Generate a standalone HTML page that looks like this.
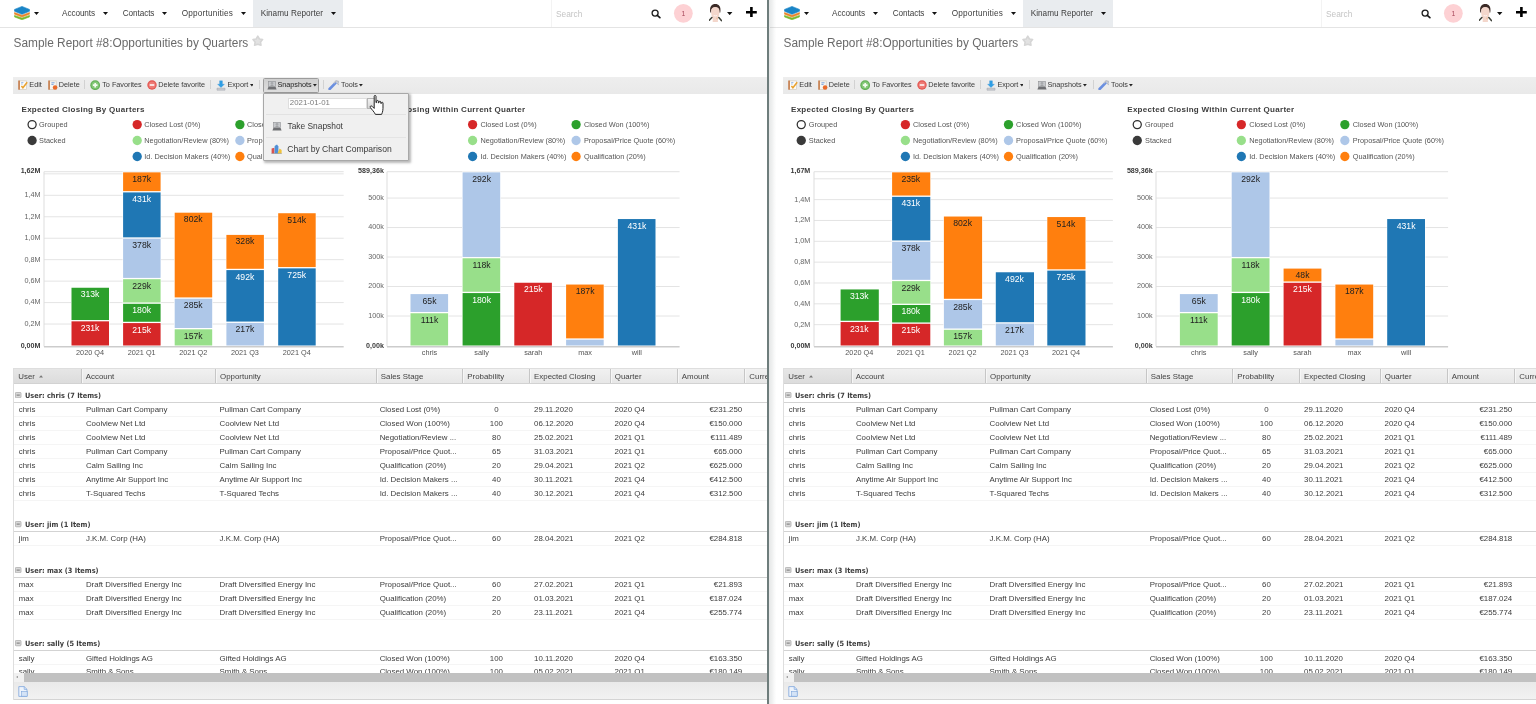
<!DOCTYPE html><html lang="en"><head><meta charset="utf-8"><title>Sample Report #8: Opportunities by Quarters</title><style>

html,body{margin:0;padding:0;background:#fff;}
body{width:1536px;height:704px;overflow:hidden;position:relative;font-family:"Liberation Sans",sans-serif;}
.pane{position:absolute;top:0;height:704px;overflow:hidden;will-change:transform;}
.t{position:absolute;white-space:nowrap;line-height:12px;height:12px;}
.b{position:absolute;display:block;}

</style></head><body>
<div class="pane" style="left:0px;width:767.2px"><div class="b" style="left:0.00px;top:27.30px;width:768.00px;height:1.20px;background:#e4e4e4;"></div>
<svg class="b" style="left:13.90px;top:5.70px" width="16" height="14.2" viewBox="0 0 16 14.2"><path d="M0.5 9.4 L8 12.0 L15.5 9.4 L15.5 10.9 L8 13.8 L0.5 10.9 Z" fill="#7ab82d" stroke="#7ab82d" stroke-width="0.6" stroke-linejoin="round"/><path d="M0.5 6.6 L8 9.2 L15.5 6.6 L15.5 8.2 L8 11.1 L0.5 8.2 Z" fill="#e9842a" stroke="#e9842a" stroke-width="0.6" stroke-linejoin="round"/><path d="M0.5 3.4 L8 0.4 L15.5 3.4 L15.5 5.3 L8 8.3 L0.5 5.3 Z" fill="#1a85c7" stroke="#1a85c7" stroke-width="0.6" stroke-linejoin="round"/></svg><svg class="b" style="left:34.30px;top:12.10px" width="5.0" height="3.0" viewBox="0 0 5.0 3.0"><path d="M0 0 H5.0 L2.5 3.0 Z" fill="#111"/></svg><div class="t" style="top:8px;font-size:8.2px;color:#3d3d3d;letter-spacing:-0.08px;left:62.00px;">Accounts</div>
<svg class="b" style="left:102.70px;top:12.10px" width="5.0" height="3.0" viewBox="0 0 5.0 3.0"><path d="M0 0 H5.0 L2.5 3.0 Z" fill="#111"/></svg><div class="t" style="top:8px;font-size:8.2px;color:#3d3d3d;letter-spacing:-0.08px;left:122.70px;">Contacts</div>
<svg class="b" style="left:162.00px;top:12.10px" width="5.0" height="3.0" viewBox="0 0 5.0 3.0"><path d="M0 0 H5.0 L2.5 3.0 Z" fill="#111"/></svg><div class="t" style="top:8px;font-size:8.2px;color:#3d3d3d;letter-spacing:0.2px;left:181.70px;">Opportunities</div>
<svg class="b" style="left:241.00px;top:12.10px" width="5.0" height="3.0" viewBox="0 0 5.0 3.0"><path d="M0 0 H5.0 L2.5 3.0 Z" fill="#111"/></svg><div class="b" style="left:253.20px;top:0.00px;width:89.80px;height:27.30px;background:#e9ecef;"></div>
<div class="t" style="top:8px;font-size:8.2px;color:#3d3d3d;letter-spacing:0.03px;left:260.70px;">Kinamu Reporter</div>
<svg class="b" style="left:331.20px;top:12.10px" width="5.0" height="3.0" viewBox="0 0 5.0 3.0"><path d="M0 0 H5.0 L2.5 3.0 Z" fill="#111"/></svg><div class="b" style="left:551.00px;top:0.00px;width:1.00px;height:27.30px;background:#f3f3f3;"></div>
<div class="t" style="top:8px;font-size:8.3px;color:#c4c4c4;left:556.00px;">Search</div>
<svg class="b" style="left:650.80px;top:8.60px" width="10" height="10" viewBox="0 0 10 10"><circle cx="4.1" cy="4.1" r="3.0" fill="none" stroke="#1a1a1a" stroke-width="1.3"/><path d="M6.3 6.3 L8.9 8.7" stroke="#1a1a1a" stroke-width="1.6" stroke-linecap="round"/></svg><svg class="b" style="left:673.00px;top:3.00px" width="21" height="21" viewBox="0 0 21 21"><circle cx="10.35" cy="10.3" r="9.4" fill="#fdd1d4"/></svg><div class="t" style="top:8px;font-size:6.9px;color:#a8485c;left:533.40px;width:300px;text-align:center;">1</div>
<svg class="b" style="left:708.80px;top:4.40px" width="12.8" height="18" viewBox="0 0 12.8 18"><path d="M1.3 8.4 C0.2 2.6 3 0.1 6.3 0.1 C9.6 0.1 12.3 2.6 11.3 8.4 L10.2 8.4 C10.6 5 9 3.5 6.3 3.5 C3.6 3.5 2 5 2.4 8.4 Z" fill="#3b2a26"/><path d="M2.1 7.2 C2.1 4.5 3.8 3.1 6.3 3.1 C8.8 3.1 10.5 4.5 10.5 7.2 C10.5 10.8 9.5 13 8.9 14.6 L8.9 18 L3.7 18 L3.7 14.6 C3.1 13 2.1 10.8 2.1 7.2 Z" fill="#f3d6cb"/><path d="M0.3 16.2 L2.9 13.5 M9.8 13.5 L12.4 16.6" stroke="#3f4139" stroke-width="1.5" stroke-linecap="round"/><path d="M7.2 14 L8.6 13.2 L8.4 16 Z" fill="#e9b48c"/><path d="M4.6 11.4 Q6.3 12.6 8 11.4" stroke="#fff" stroke-width="0.7" fill="none"/></svg><svg class="b" style="left:727.20px;top:12.20px" width="5.4" height="3.2" viewBox="0 0 5.4 3.2"><path d="M0 0 H5.4 L2.7 3.2 Z" fill="#111"/></svg><svg class="b" style="left:746.20px;top:7.30px" width="10.8" height="10.2" viewBox="0 0 10.8 10.2"><path d="M0 3.9 H4.1 V0 H6.7 V3.9 H10.8 V6.4 H6.7 V10.2 H4.1 V6.4 H0 Z" fill="#000"/></svg><div class="t" style="top:37px;font-size:11.86px;color:#6a6a6a;left:13.60px;">Sample Report #8:Opportunities by Quarters</div>
<svg class="b" style="left:252.20px;top:35.40px" width="11.6" height="11.6" viewBox="0 0 11.6 11.6"><path d="M5.8 1.2 L7.4 4.0 L10.6 4.6 L8.5 7.0 L9.0 10.3 L5.8 9.2 L2.6 10.3 L3.1 7.0 L1.0 4.6 L4.2 4.0 Z" fill="#e2e2e2" stroke="#d6d6d6" stroke-width="1.6" stroke-linejoin="round"/></svg><div class="b" style="left:13.30px;top:77.00px;width:760.00px;height:17.00px;background:linear-gradient(#eeeeee,#e9e9e9);"></div>
<svg class="b" style="left:18.20px;top:80.00px" width="10" height="10" viewBox="0 0 10 10"><rect x="1.2" y="0.9" width="7.4" height="8.5" fill="#fcfbf8" stroke="#d3ccc0" stroke-width="0.7"/><rect x="0.3" y="0.5" width="1.5" height="9.2" fill="#c4733c"/><path d="M3.2 2.6 H5.4 M3.2 4 H4.6" stroke="#8db3e6" stroke-width="0.9"/><path d="M3.4 5.9 L4.9 7.7 L9.2 2.2" stroke="#e9a22e" stroke-width="1.5" fill="none"/></svg><div class="t" style="top:79px;font-size:7.28px;color:#3a3a3a;left:29.30px;">Edit</div>
<svg class="b" style="left:47.80px;top:80.00px" width="10" height="10" viewBox="0 0 10 10"><rect x="1.2" y="0.9" width="7" height="8.5" fill="#f7f5f1" stroke="#d3ccc0" stroke-width="0.7"/><rect x="0.3" y="0.5" width="1.5" height="9.2" fill="#c4733c"/><path d="M3.4 2.8 H6.6 M3.4 4.4 H5.6" stroke="#7ea6de" stroke-width="1"/><circle cx="7.1" cy="7.5" r="2.3" fill="#e96b2b"/></svg><div class="t" style="top:79px;font-size:7.28px;color:#3a3a3a;left:58.70px;">Delete</div>
<div class="b" style="left:84.20px;top:80.20px;width:0.90px;height:9.00px;background:#d2d2d2;"></div>
<svg class="b" style="left:89.80px;top:80.00px" width="10.4" height="10.4" viewBox="0 0 10.4 10.4"><circle cx="5.2" cy="5.2" r="4.9" fill="#63b057"/><circle cx="5.2" cy="5.2" r="3.6" fill="#86c97a"/><path d="M5.2 2.9 V7.5 M2.9 5.2 H7.5" stroke="#f4fbf2" stroke-width="1.7"/></svg><div class="t" style="top:79px;font-size:7.28px;color:#3a3a3a;left:102.20px;">To Favorites</div>
<svg class="b" style="left:146.60px;top:80.20px" width="10" height="10" viewBox="0 0 10 10"><circle cx="5" cy="5" r="4.7" fill="#e2544f"/><circle cx="5" cy="5" r="3.5" fill="#ee7a74"/><path d="M2.7 5 H7.3" stroke="#fdf0ef" stroke-width="1.7"/></svg><div class="t" style="top:79px;font-size:7.28px;color:#3a3a3a;left:158.20px;">Delete favorite</div>
<div class="b" style="left:210.40px;top:80.20px;width:0.90px;height:9.00px;background:#d2d2d2;"></div>
<svg class="b" style="left:215.60px;top:79.80px" width="10" height="11" viewBox="0 0 10 11"><path d="M1 8.2 H9 V10.2 H1 Z" fill="#c9ccd2" stroke="#9aa0aa" stroke-width="0.5"/><path d="M5 7.6 L1.6 4.2 H3.6 V0.8 H6.4 V4.2 H8.4 Z" fill="#2f9fe6" stroke="#2b8ad0" stroke-width="0.3"/></svg><div class="t" style="top:79px;font-size:7.28px;color:#3a3a3a;left:227.40px;">Export</div>
<svg class="b" style="left:249.60px;top:84.30px" width="3.8" height="2.4" viewBox="0 0 3.8 2.4"><path d="M0 0 H3.8 L1.9 2.4 Z" fill="#222"/></svg><div class="b" style="left:258.90px;top:80.20px;width:0.90px;height:9.00px;background:#d2d2d2;"></div>
<div class="b" style="left:263.30px;top:78.20px;width:56.20px;height:14.40px;background:linear-gradient(#cfcfcf,#dedede);border:0.9px solid #9c9c9c;border-radius:1.5px;box-sizing:border-box;"></div>
<svg class="b" style="left:266.60px;top:80.00px" width="10" height="10" viewBox="0 0 10 10"><path d="M0.4 9.4 L1.6 6.4 H8.4 L9.6 9.4 Z" fill="#6f7073"/><rect x="1.6" y="1.4" width="6.8" height="5.2" fill="#c7c9cc" stroke="#8f9194" stroke-width="0.6"/><circle cx="5" cy="3.4" r="1.4" fill="#a7a9ac"/><path d="M2.6 6.4 Q5 3.8 7.4 6.4 Z" fill="#9d9fa2"/></svg><div class="t" style="top:79px;font-size:7.28px;color:#222;left:277.40px;">Snapshots</div>
<svg class="b" style="left:312.90px;top:84.30px" width="3.8" height="2.4" viewBox="0 0 3.8 2.4"><path d="M0 0 H3.8 L1.9 2.4 Z" fill="#222"/></svg><div class="b" style="left:323.30px;top:80.20px;width:0.90px;height:9.00px;background:#d2d2d2;"></div>
<svg class="b" style="left:328.00px;top:79.80px" width="11.4" height="10" viewBox="0 0 11.4 10"><path d="M1.6 9 L7.4 3.2" stroke="#6a8fe0" stroke-width="2.6" stroke-linecap="round"/><path d="M6.4 2.8 L8.2 0.8 L10.8 1.6 L9.6 3.4 L10.4 4.4" stroke="#b9bdc6" stroke-width="1.4" fill="none" stroke-linecap="round"/></svg><div class="t" style="top:79px;font-size:7.28px;color:#3a3a3a;left:341.00px;">Tools</div>
<svg class="b" style="left:359.00px;top:84.30px" width="3.8" height="2.4" viewBox="0 0 3.8 2.4"><path d="M0 0 H3.8 L1.9 2.4 Z" fill="#222"/></svg><svg class="b" style="left:41.80px;top:165.00px" width="303.70" height="186" viewBox="0 0 303.70 186"><rect x="2.00" y="6.20" width="299.70" height="1.00" fill="#e2e2e2"/><rect x="2.00" y="158.54" width="299.70" height="1.00" fill="#e4e4e4"/><rect x="2.00" y="137.09" width="299.70" height="1.00" fill="#e4e4e4"/><rect x="2.00" y="115.63" width="299.70" height="1.00" fill="#e4e4e4"/><rect x="2.00" y="94.17" width="299.70" height="1.00" fill="#e4e4e4"/><rect x="2.00" y="72.72" width="299.70" height="1.00" fill="#e4e4e4"/><rect x="2.00" y="51.26" width="299.70" height="1.00" fill="#e4e4e4"/><rect x="2.00" y="29.80" width="299.70" height="1.00" fill="#e4e4e4"/><rect x="2.00" y="8.35" width="299.70" height="1.00" fill="#e4e4e4"/><rect x="1.50" y="6.70" width="1.00" height="174.80" fill="#dedede"/><rect x="2.00" y="181.00" width="299.70" height="1.50" fill="#cccccc"/><rect x="29.00" y="155.49" width="38.50" height="25.01" fill="#fff"/><rect x="29.50" y="156.34" width="37.50" height="24.16" fill="#d62728"/><rect x="29.00" y="121.91" width="38.50" height="33.78" fill="#fff"/><rect x="29.50" y="122.76" width="37.50" height="32.28" fill="#2ca02c"/><rect x="80.60" y="157.23" width="38.50" height="23.27" fill="#fff"/><rect x="81.10" y="158.08" width="37.50" height="22.42" fill="#d62728"/><rect x="80.60" y="137.92" width="38.50" height="19.51" fill="#fff"/><rect x="81.10" y="138.77" width="37.50" height="18.01" fill="#2ca02c"/><rect x="80.60" y="113.35" width="38.50" height="24.77" fill="#fff"/><rect x="81.10" y="114.20" width="37.50" height="23.27" fill="#98df8a"/><rect x="80.60" y="72.80" width="38.50" height="40.75" fill="#fff"/><rect x="81.10" y="73.65" width="37.50" height="39.25" fill="#aec7e8"/><rect x="80.60" y="26.56" width="38.50" height="46.44" fill="#fff"/><rect x="81.10" y="27.41" width="37.50" height="44.94" fill="#1f77b4"/><rect x="80.60" y="6.50" width="38.50" height="20.26" fill="#fff"/><rect x="81.10" y="7.35" width="37.50" height="18.76" fill="#ff7f0e"/><rect x="132.20" y="163.46" width="38.50" height="17.04" fill="#fff"/><rect x="132.70" y="164.31" width="37.50" height="16.19" fill="#98df8a"/><rect x="132.20" y="132.88" width="38.50" height="30.78" fill="#fff"/><rect x="132.70" y="133.73" width="37.50" height="29.28" fill="#aec7e8"/><rect x="132.20" y="46.84" width="38.50" height="86.24" fill="#fff"/><rect x="132.70" y="47.69" width="37.50" height="84.74" fill="#ff7f0e"/><rect x="183.90" y="157.02" width="38.50" height="23.48" fill="#fff"/><rect x="184.40" y="157.87" width="37.50" height="22.63" fill="#aec7e8"/><rect x="183.90" y="104.24" width="38.50" height="52.98" fill="#fff"/><rect x="184.40" y="105.09" width="37.50" height="51.48" fill="#1f77b4"/><rect x="183.90" y="69.05" width="38.50" height="35.39" fill="#fff"/><rect x="184.40" y="69.90" width="37.50" height="33.89" fill="#ff7f0e"/><rect x="235.70" y="102.52" width="38.50" height="77.98" fill="#fff"/><rect x="236.20" y="103.37" width="37.50" height="77.13" fill="#1f77b4"/><rect x="235.70" y="47.38" width="38.50" height="55.34" fill="#fff"/><rect x="236.20" y="48.23" width="37.50" height="53.84" fill="#ff7f0e"/></svg><div class="t" style="top:104px;font-size:8.0px;color:#3c3c3c;font-weight:bold;letter-spacing:0.29px;left:21.50px;">Expected Closing By Quarters</div>
<svg class="b" style="left:11.50px;top:115px" width="260" height="50" viewBox="0 0 260 50"><circle cx="20.10" cy="9.60" r="4.05" fill="#fff" stroke="#2f2f2f" stroke-width="1.25"/><circle cx="20.10" cy="25.50" r="4.65" fill="#3a3a3a"/><circle cx="125.20" cy="9.60" r="4.65" fill="#d62728"/><circle cx="227.90" cy="9.60" r="4.65" fill="#2ca02c"/><circle cx="125.20" cy="25.50" r="4.65" fill="#98df8a"/><circle cx="227.90" cy="25.50" r="4.65" fill="#aec7e8"/><circle cx="125.20" cy="41.50" r="4.65" fill="#1f77b4"/><circle cx="227.90" cy="41.50" r="4.65" fill="#ff7f0e"/></svg><div class="t" style="top:119px;font-size:7.34px;color:#555;left:39.10px;">Grouped</div>
<div class="t" style="top:135px;font-size:7.34px;color:#555;left:39.10px;">Stacked</div>
<div class="t" style="top:119px;font-size:7.34px;color:#555;left:144.30px;">Closed Lost (0%)</div>
<div class="t" style="top:119px;font-size:7.34px;color:#555;left:247.00px;">Closed Won (100%)</div>
<div class="t" style="top:135px;font-size:7.34px;color:#555;left:144.30px;">Negotiation/Review (80%)</div>
<div class="t" style="top:135px;font-size:7.34px;color:#555;left:247.00px;">Proposal/Price Quote (60%)</div>
<div class="t" style="top:151px;font-size:7.34px;color:#555;left:144.30px;">Id. Decision Makers (40%)</div>
<div class="t" style="top:151px;font-size:7.34px;color:#555;left:247.00px;">Qualification (20%)</div>
<div class="t" style="top:318px;font-size:7.25px;color:#666;left:-259.50px;width:300px;text-align:right;">0,2M</div>
<div class="t" style="top:296px;font-size:7.25px;color:#666;left:-259.50px;width:300px;text-align:right;">0,4M</div>
<div class="t" style="top:275px;font-size:7.25px;color:#666;left:-259.50px;width:300px;text-align:right;">0,6M</div>
<div class="t" style="top:254px;font-size:7.25px;color:#666;left:-259.50px;width:300px;text-align:right;">0,8M</div>
<div class="t" style="top:232px;font-size:7.25px;color:#666;left:-259.50px;width:300px;text-align:right;">1,0M</div>
<div class="t" style="top:211px;font-size:7.25px;color:#666;left:-259.50px;width:300px;text-align:right;">1,2M</div>
<div class="t" style="top:189px;font-size:7.25px;color:#666;left:-259.50px;width:300px;text-align:right;">1,4M</div>
<div class="t" style="top:165px;font-size:7.15px;color:#3a3a3a;font-weight:bold;left:-259.50px;width:300px;text-align:right;">1,62M</div>
<div class="t" style="top:340px;font-size:7.15px;color:#3a3a3a;font-weight:bold;left:-259.50px;width:300px;text-align:right;">0,00M</div>
<div class="t" style="top:322px;font-size:8.66px;color:#fff;left:-59.95px;width:300px;text-align:center;">231k</div>
<div class="t" style="top:288px;font-size:8.66px;color:#fff;left:-59.95px;width:300px;text-align:center;">313k</div>
<div class="t" style="top:347px;font-size:7.3px;color:#555;left:-59.95px;width:300px;text-align:center;">2020 Q4</div>
<div class="t" style="top:324px;font-size:8.66px;color:#fff;left:-8.35px;width:300px;text-align:center;">215k</div>
<div class="t" style="top:304px;font-size:8.66px;color:#fff;left:-8.35px;width:300px;text-align:center;">180k</div>
<div class="t" style="top:280px;font-size:8.66px;color:#222;left:-8.35px;width:300px;text-align:center;">229k</div>
<div class="t" style="top:239px;font-size:8.66px;color:#222;left:-8.35px;width:300px;text-align:center;">378k</div>
<div class="t" style="top:193px;font-size:8.66px;color:#fff;left:-8.35px;width:300px;text-align:center;">431k</div>
<div class="t" style="top:173px;font-size:8.66px;color:#222;left:-8.35px;width:300px;text-align:center;">187k</div>
<div class="t" style="top:347px;font-size:7.3px;color:#555;left:-8.35px;width:300px;text-align:center;">2021 Q1</div>
<div class="t" style="top:330px;font-size:8.66px;color:#222;left:43.25px;width:300px;text-align:center;">157k</div>
<div class="t" style="top:299px;font-size:8.66px;color:#222;left:43.25px;width:300px;text-align:center;">285k</div>
<div class="t" style="top:213px;font-size:8.66px;color:#222;left:43.25px;width:300px;text-align:center;">802k</div>
<div class="t" style="top:347px;font-size:7.3px;color:#555;left:43.25px;width:300px;text-align:center;">2021 Q2</div>
<div class="t" style="top:323px;font-size:8.66px;color:#222;left:94.95px;width:300px;text-align:center;">217k</div>
<div class="t" style="top:271px;font-size:8.66px;color:#fff;left:94.95px;width:300px;text-align:center;">492k</div>
<div class="t" style="top:235px;font-size:8.66px;color:#222;left:94.95px;width:300px;text-align:center;">328k</div>
<div class="t" style="top:347px;font-size:7.3px;color:#555;left:94.95px;width:300px;text-align:center;">2021 Q3</div>
<div class="t" style="top:269px;font-size:8.66px;color:#fff;left:146.75px;width:300px;text-align:center;">725k</div>
<div class="t" style="top:214px;font-size:8.66px;color:#222;left:146.75px;width:300px;text-align:center;">514k</div>
<div class="t" style="top:347px;font-size:7.3px;color:#555;left:146.75px;width:300px;text-align:center;">2021 Q4</div>
<svg class="b" style="left:385.20px;top:165.00px" width="296.60" height="186" viewBox="0 0 296.60 186"><rect x="2.00" y="6.20" width="292.60" height="1.00" fill="#e2e2e2"/><rect x="2.00" y="150.51" width="292.60" height="1.00" fill="#e4e4e4"/><rect x="2.00" y="121.02" width="292.60" height="1.00" fill="#e4e4e4"/><rect x="2.00" y="91.53" width="292.60" height="1.00" fill="#e4e4e4"/><rect x="2.00" y="62.04" width="292.60" height="1.00" fill="#e4e4e4"/><rect x="2.00" y="32.55" width="292.60" height="1.00" fill="#e4e4e4"/><rect x="1.50" y="6.70" width="1.00" height="174.80" fill="#dedede"/><rect x="2.00" y="181.00" width="292.60" height="1.50" fill="#cccccc"/><rect x="25.00" y="147.42" width="38.60" height="33.08" fill="#fff"/><rect x="25.50" y="148.27" width="37.60" height="32.23" fill="#98df8a"/><rect x="25.00" y="128.25" width="38.60" height="19.37" fill="#fff"/><rect x="25.50" y="129.10" width="37.60" height="17.87" fill="#aec7e8"/><rect x="77.10" y="127.22" width="38.60" height="53.28" fill="#fff"/><rect x="77.60" y="128.07" width="37.60" height="52.43" fill="#2ca02c"/><rect x="77.10" y="92.42" width="38.60" height="35.00" fill="#fff"/><rect x="77.60" y="93.27" width="37.60" height="33.50" fill="#98df8a"/><rect x="77.10" y="6.49" width="38.60" height="86.13" fill="#fff"/><rect x="77.60" y="7.34" width="37.60" height="84.63" fill="#aec7e8"/><rect x="128.80" y="116.90" width="38.60" height="63.60" fill="#fff"/><rect x="129.30" y="117.75" width="37.60" height="62.75" fill="#d62728"/><rect x="180.60" y="173.84" width="38.60" height="6.66" fill="#fff"/><rect x="181.10" y="174.69" width="37.60" height="5.81" fill="#aec7e8"/><rect x="180.60" y="118.70" width="38.60" height="55.35" fill="#fff"/><rect x="181.10" y="119.55" width="37.60" height="53.85" fill="#ff7f0e"/><rect x="232.40" y="53.20" width="38.60" height="127.30" fill="#fff"/><rect x="232.90" y="54.05" width="37.60" height="126.45" fill="#1f77b4"/></svg><div class="t" style="top:104px;font-size:8.0px;color:#3c3c3c;font-weight:bold;letter-spacing:0.29px;left:358.20px;">Expected Closing Within Current Quarter</div>
<svg class="b" style="left:348.20px;top:115px" width="260" height="50" viewBox="0 0 260 50"><circle cx="20.10" cy="9.60" r="4.05" fill="#fff" stroke="#2f2f2f" stroke-width="1.25"/><circle cx="20.10" cy="25.50" r="4.65" fill="#3a3a3a"/><circle cx="124.60" cy="9.60" r="4.65" fill="#d62728"/><circle cx="228.10" cy="9.60" r="4.65" fill="#2ca02c"/><circle cx="124.60" cy="25.50" r="4.65" fill="#98df8a"/><circle cx="228.10" cy="25.50" r="4.65" fill="#aec7e8"/><circle cx="124.60" cy="41.50" r="4.65" fill="#1f77b4"/><circle cx="228.10" cy="41.50" r="4.65" fill="#ff7f0e"/></svg><div class="t" style="top:119px;font-size:7.34px;color:#555;left:375.80px;">Grouped</div>
<div class="t" style="top:135px;font-size:7.34px;color:#555;left:375.80px;">Stacked</div>
<div class="t" style="top:119px;font-size:7.34px;color:#555;left:480.40px;">Closed Lost (0%)</div>
<div class="t" style="top:119px;font-size:7.34px;color:#555;left:583.90px;">Closed Won (100%)</div>
<div class="t" style="top:135px;font-size:7.34px;color:#555;left:480.40px;">Negotiation/Review (80%)</div>
<div class="t" style="top:135px;font-size:7.34px;color:#555;left:583.90px;">Proposal/Price Quote (60%)</div>
<div class="t" style="top:151px;font-size:7.34px;color:#555;left:480.40px;">Id. Decision Makers (40%)</div>
<div class="t" style="top:151px;font-size:7.34px;color:#555;left:583.90px;">Qualification (20%)</div>
<div class="t" style="top:310px;font-size:7.25px;color:#666;left:83.90px;width:300px;text-align:right;">100k</div>
<div class="t" style="top:280px;font-size:7.25px;color:#666;left:83.90px;width:300px;text-align:right;">200k</div>
<div class="t" style="top:251px;font-size:7.25px;color:#666;left:83.90px;width:300px;text-align:right;">300k</div>
<div class="t" style="top:221px;font-size:7.25px;color:#666;left:83.90px;width:300px;text-align:right;">400k</div>
<div class="t" style="top:192px;font-size:7.25px;color:#666;left:83.90px;width:300px;text-align:right;">500k</div>
<div class="t" style="top:165px;font-size:7.15px;color:#3a3a3a;font-weight:bold;left:83.90px;width:300px;text-align:right;">589,36k</div>
<div class="t" style="top:340px;font-size:7.15px;color:#3a3a3a;font-weight:bold;left:83.90px;width:300px;text-align:right;">0,00k</div>
<div class="t" style="top:314px;font-size:8.66px;color:#222;left:279.50px;width:300px;text-align:center;">111k</div>
<div class="t" style="top:295px;font-size:8.66px;color:#222;left:279.50px;width:300px;text-align:center;">65k</div>
<div class="t" style="top:347px;font-size:7.3px;color:#555;left:279.50px;width:300px;text-align:center;">chris</div>
<div class="t" style="top:294px;font-size:8.66px;color:#fff;left:331.60px;width:300px;text-align:center;">180k</div>
<div class="t" style="top:259px;font-size:8.66px;color:#222;left:331.60px;width:300px;text-align:center;">118k</div>
<div class="t" style="top:173px;font-size:8.66px;color:#222;left:331.60px;width:300px;text-align:center;">292k</div>
<div class="t" style="top:347px;font-size:7.3px;color:#555;left:331.60px;width:300px;text-align:center;">sally</div>
<div class="t" style="top:283px;font-size:8.66px;color:#fff;left:383.30px;width:300px;text-align:center;">215k</div>
<div class="t" style="top:347px;font-size:7.3px;color:#555;left:383.30px;width:300px;text-align:center;">sarah</div>
<div class="t" style="top:285px;font-size:8.66px;color:#222;left:435.10px;width:300px;text-align:center;">187k</div>
<div class="t" style="top:347px;font-size:7.3px;color:#555;left:435.10px;width:300px;text-align:center;">max</div>
<div class="t" style="top:220px;font-size:8.66px;color:#fff;left:486.90px;width:300px;text-align:center;">431k</div>
<div class="t" style="top:347px;font-size:7.3px;color:#555;left:486.90px;width:300px;text-align:center;">will</div>
<div class="b" style="left:0;top:367px;width:768px;height:306.2px;overflow:hidden"><div class="b" style="left:13.20px;top:0.90px;width:760.00px;height:16.00px;background:linear-gradient(#f1f1f1,#e7e7e7);border-top:0.8px solid #dedede;border-bottom:0.8px solid #d2d2d2;box-sizing:border-box;"></div>
<div class="b" style="left:13.75px;top:1.60px;width:67.40px;height:14.60px;background:linear-gradient(#e6e6e6,#dcdcdc);"></div>
<div class="t" style="top:4px;font-size:7.88px;color:#444;left:18.35px;">User</div>
<div class="b" style="left:80.65px;top:1.60px;width:0.90px;height:14.70px;background:#c6c6c6;"></div>
<div class="b" style="left:81.55px;top:1.60px;width:0.80px;height:14.70px;background:#f6f6f6;"></div>
<div class="t" style="top:4px;font-size:7.88px;color:#444;left:85.85px;">Account</div>
<div class="b" style="left:214.90px;top:1.60px;width:0.90px;height:14.70px;background:#c6c6c6;"></div>
<div class="b" style="left:215.80px;top:1.60px;width:0.80px;height:14.70px;background:#f6f6f6;"></div>
<div class="t" style="top:4px;font-size:7.88px;color:#444;left:220.10px;">Opportunity</div>
<div class="b" style="left:375.65px;top:1.60px;width:0.90px;height:14.70px;background:#c6c6c6;"></div>
<div class="b" style="left:376.55px;top:1.60px;width:0.80px;height:14.70px;background:#f6f6f6;"></div>
<div class="t" style="top:4px;font-size:7.88px;color:#444;left:380.85px;">Sales Stage</div>
<div class="b" style="left:462.15px;top:1.60px;width:0.90px;height:14.70px;background:#c6c6c6;"></div>
<div class="b" style="left:463.05px;top:1.60px;width:0.80px;height:14.70px;background:#f6f6f6;"></div>
<div class="t" style="top:4px;font-size:7.88px;color:#444;left:467.35px;">Probability</div>
<div class="b" style="left:528.90px;top:1.60px;width:0.90px;height:14.70px;background:#c6c6c6;"></div>
<div class="b" style="left:529.80px;top:1.60px;width:0.80px;height:14.70px;background:#f6f6f6;"></div>
<div class="t" style="top:4px;font-size:7.88px;color:#444;left:534.10px;">Expected Closing</div>
<div class="b" style="left:609.65px;top:1.60px;width:0.90px;height:14.70px;background:#c6c6c6;"></div>
<div class="b" style="left:610.55px;top:1.60px;width:0.80px;height:14.70px;background:#f6f6f6;"></div>
<div class="t" style="top:4px;font-size:7.88px;color:#444;left:614.85px;">Quarter</div>
<div class="b" style="left:676.65px;top:1.60px;width:0.90px;height:14.70px;background:#c6c6c6;"></div>
<div class="b" style="left:677.55px;top:1.60px;width:0.80px;height:14.70px;background:#f6f6f6;"></div>
<div class="t" style="top:4px;font-size:7.88px;color:#444;left:681.85px;">Amount</div>
<div class="b" style="left:744.15px;top:1.60px;width:0.90px;height:14.70px;background:#c6c6c6;"></div>
<div class="b" style="left:745.05px;top:1.60px;width:0.80px;height:14.70px;background:#f6f6f6;"></div>
<div class="t" style="top:4px;font-size:7.88px;color:#444;left:749.35px;">Currency</div>
<svg class="b" style="left:38.70px;top:8.30px" width="4.2" height="2.6" viewBox="0 0 4.2 2.6"><path d="M0 2.6 H4.2 L2.1 0.2 Z" fill="#777"/></svg><svg class="b" style="left:15.20px;top:25.20px" width="6.4" height="6.2" viewBox="0 0 6.4 6.2"><rect x="0.4" y="0.4" width="5.6" height="5.4" rx="0.8" fill="#d9d9d9" stroke="#a9a9a9" stroke-width="0.8"/><path d="M1.6 3.1 H4.8" stroke="#6a6a6a" stroke-width="0.9"/></svg><div class="t" style="top:23px;font-size:7.33px;color:#3c3c3c;font-weight:bold;font-family:'DejaVu Sans Condensed', 'DejaVu Sans', sans-serif;left:25.00px;">User: chris (7 Items)</div>
<div class="b" style="left:13.75px;top:34.80px;width:760.00px;height:1.30px;background:#d3d3d3;"></div>
<div class="t" style="top:37px;font-size:7.88px;color:#3c3c3c;left:18.75px;">chris</div>
<div class="t" style="top:37px;font-size:7.88px;color:#3c3c3c;left:85.95px;">Pullman Cart Company</div>
<div class="t" style="top:37px;font-size:7.88px;color:#3c3c3c;left:219.60px;">Pullman Cart Company</div>
<div class="t" style="top:37px;font-size:7.88px;color:#3c3c3c;left:379.65px;">Closed Lost (0%)</div>
<div class="t" style="top:37px;font-size:7.88px;color:#3c3c3c;left:346.43px;width:300px;text-align:center;">0</div>
<div class="t" style="top:37px;font-size:7.88px;color:#3c3c3c;left:534.00px;">29.11.2020</div>
<div class="t" style="top:37px;font-size:7.88px;color:#3c3c3c;left:614.55px;">2020 Q4</div>
<div class="t" style="top:37px;font-size:7.88px;color:#3c3c3c;left:442.25px;width:300px;text-align:right;">€231.250</div>
<div class="b" style="left:13.75px;top:49.20px;width:760.00px;height:0.80px;background:#f5f5f5;"></div>
<div class="t" style="top:51px;font-size:7.88px;color:#3c3c3c;left:18.75px;">chris</div>
<div class="t" style="top:51px;font-size:7.88px;color:#3c3c3c;left:85.95px;">Coolview Net Ltd</div>
<div class="t" style="top:51px;font-size:7.88px;color:#3c3c3c;left:219.60px;">Coolview Net Ltd</div>
<div class="t" style="top:51px;font-size:7.88px;color:#3c3c3c;left:379.65px;">Closed Won (100%)</div>
<div class="t" style="top:51px;font-size:7.88px;color:#3c3c3c;left:346.43px;width:300px;text-align:center;">100</div>
<div class="t" style="top:51px;font-size:7.88px;color:#3c3c3c;left:534.00px;">06.12.2020</div>
<div class="t" style="top:51px;font-size:7.88px;color:#3c3c3c;left:614.55px;">2020 Q4</div>
<div class="t" style="top:51px;font-size:7.88px;color:#3c3c3c;left:442.25px;width:300px;text-align:right;">€150.000</div>
<div class="b" style="left:13.75px;top:63.12px;width:760.00px;height:0.80px;background:#f5f5f5;"></div>
<div class="t" style="top:65px;font-size:7.88px;color:#3c3c3c;left:18.75px;">chris</div>
<div class="t" style="top:65px;font-size:7.88px;color:#3c3c3c;left:85.95px;">Coolview Net Ltd</div>
<div class="t" style="top:65px;font-size:7.88px;color:#3c3c3c;left:219.60px;">Coolview Net Ltd</div>
<div class="t" style="top:65px;font-size:7.88px;color:#3c3c3c;left:379.65px;">Negotiation/Review ...</div>
<div class="t" style="top:65px;font-size:7.88px;color:#3c3c3c;left:346.43px;width:300px;text-align:center;">80</div>
<div class="t" style="top:65px;font-size:7.88px;color:#3c3c3c;left:534.00px;">25.02.2021</div>
<div class="t" style="top:65px;font-size:7.88px;color:#3c3c3c;left:614.55px;">2021 Q1</div>
<div class="t" style="top:65px;font-size:7.88px;color:#3c3c3c;left:442.25px;width:300px;text-align:right;">€111.489</div>
<div class="b" style="left:13.75px;top:77.04px;width:760.00px;height:0.80px;background:#f5f5f5;"></div>
<div class="t" style="top:79px;font-size:7.88px;color:#3c3c3c;left:18.75px;">chris</div>
<div class="t" style="top:79px;font-size:7.88px;color:#3c3c3c;left:85.95px;">Pullman Cart Company</div>
<div class="t" style="top:79px;font-size:7.88px;color:#3c3c3c;left:219.60px;">Pullman Cart Company</div>
<div class="t" style="top:79px;font-size:7.88px;color:#3c3c3c;left:379.65px;">Proposal/Price Quot...</div>
<div class="t" style="top:79px;font-size:7.88px;color:#3c3c3c;left:346.43px;width:300px;text-align:center;">65</div>
<div class="t" style="top:79px;font-size:7.88px;color:#3c3c3c;left:534.00px;">31.03.2021</div>
<div class="t" style="top:79px;font-size:7.88px;color:#3c3c3c;left:614.55px;">2021 Q1</div>
<div class="t" style="top:79px;font-size:7.88px;color:#3c3c3c;left:442.25px;width:300px;text-align:right;">€65.000</div>
<div class="b" style="left:13.75px;top:90.96px;width:760.00px;height:0.80px;background:#f5f5f5;"></div>
<div class="t" style="top:93px;font-size:7.88px;color:#3c3c3c;left:18.75px;">chris</div>
<div class="t" style="top:93px;font-size:7.88px;color:#3c3c3c;left:85.95px;">Calm Sailing Inc</div>
<div class="t" style="top:93px;font-size:7.88px;color:#3c3c3c;left:219.60px;">Calm Sailing Inc</div>
<div class="t" style="top:93px;font-size:7.88px;color:#3c3c3c;left:379.65px;">Qualification (20%)</div>
<div class="t" style="top:93px;font-size:7.88px;color:#3c3c3c;left:346.43px;width:300px;text-align:center;">20</div>
<div class="t" style="top:93px;font-size:7.88px;color:#3c3c3c;left:534.00px;">29.04.2021</div>
<div class="t" style="top:93px;font-size:7.88px;color:#3c3c3c;left:614.55px;">2021 Q2</div>
<div class="t" style="top:93px;font-size:7.88px;color:#3c3c3c;left:442.25px;width:300px;text-align:right;">€625.000</div>
<div class="b" style="left:13.75px;top:104.88px;width:760.00px;height:0.80px;background:#f5f5f5;"></div>
<div class="t" style="top:107px;font-size:7.88px;color:#3c3c3c;left:18.75px;">chris</div>
<div class="t" style="top:107px;font-size:7.88px;color:#3c3c3c;left:85.95px;">Anytime Air Support Inc</div>
<div class="t" style="top:107px;font-size:7.88px;color:#3c3c3c;left:219.60px;">Anytime Air Support Inc</div>
<div class="t" style="top:107px;font-size:7.88px;color:#3c3c3c;left:379.65px;">Id. Decision Makers ...</div>
<div class="t" style="top:107px;font-size:7.88px;color:#3c3c3c;left:346.43px;width:300px;text-align:center;">40</div>
<div class="t" style="top:107px;font-size:7.88px;color:#3c3c3c;left:534.00px;">30.11.2021</div>
<div class="t" style="top:107px;font-size:7.88px;color:#3c3c3c;left:614.55px;">2021 Q4</div>
<div class="t" style="top:107px;font-size:7.88px;color:#3c3c3c;left:442.25px;width:300px;text-align:right;">€412.500</div>
<div class="b" style="left:13.75px;top:118.80px;width:760.00px;height:0.80px;background:#f5f5f5;"></div>
<div class="t" style="top:121px;font-size:7.88px;color:#3c3c3c;left:18.75px;">chris</div>
<div class="t" style="top:121px;font-size:7.88px;color:#3c3c3c;left:85.95px;">T-Squared Techs</div>
<div class="t" style="top:121px;font-size:7.88px;color:#3c3c3c;left:219.60px;">T-Squared Techs</div>
<div class="t" style="top:121px;font-size:7.88px;color:#3c3c3c;left:379.65px;">Id. Decision Makers ...</div>
<div class="t" style="top:121px;font-size:7.88px;color:#3c3c3c;left:346.43px;width:300px;text-align:center;">40</div>
<div class="t" style="top:121px;font-size:7.88px;color:#3c3c3c;left:534.00px;">30.12.2021</div>
<div class="t" style="top:121px;font-size:7.88px;color:#3c3c3c;left:614.55px;">2021 Q4</div>
<div class="t" style="top:121px;font-size:7.88px;color:#3c3c3c;left:442.25px;width:300px;text-align:right;">€312.500</div>
<div class="b" style="left:13.75px;top:132.72px;width:760.00px;height:0.80px;background:#f5f5f5;"></div>
<svg class="b" style="left:15.20px;top:154.34px" width="6.4" height="6.2" viewBox="0 0 6.4 6.2"><rect x="0.4" y="0.4" width="5.6" height="5.4" rx="0.8" fill="#d9d9d9" stroke="#a9a9a9" stroke-width="0.8"/><path d="M1.6 3.1 H4.8" stroke="#6a6a6a" stroke-width="0.9"/></svg><div class="t" style="top:152px;font-size:7.33px;color:#3c3c3c;font-weight:bold;font-family:'DejaVu Sans Condensed', 'DejaVu Sans', sans-serif;left:25.00px;">User: jim (1 Item)</div>
<div class="b" style="left:13.75px;top:163.94px;width:760.00px;height:1.30px;background:#d3d3d3;"></div>
<div class="t" style="top:166px;font-size:7.88px;color:#3c3c3c;left:18.75px;">jim</div>
<div class="t" style="top:166px;font-size:7.88px;color:#3c3c3c;left:85.95px;">J.K.M. Corp (HA)</div>
<div class="t" style="top:166px;font-size:7.88px;color:#3c3c3c;left:219.60px;">J.K.M. Corp (HA)</div>
<div class="t" style="top:166px;font-size:7.88px;color:#3c3c3c;left:379.65px;">Proposal/Price Quot...</div>
<div class="t" style="top:166px;font-size:7.88px;color:#3c3c3c;left:346.43px;width:300px;text-align:center;">60</div>
<div class="t" style="top:166px;font-size:7.88px;color:#3c3c3c;left:534.00px;">28.04.2021</div>
<div class="t" style="top:166px;font-size:7.88px;color:#3c3c3c;left:614.55px;">2021 Q2</div>
<div class="t" style="top:166px;font-size:7.88px;color:#3c3c3c;left:442.25px;width:300px;text-align:right;">€284.818</div>
<div class="b" style="left:13.75px;top:178.34px;width:760.00px;height:0.80px;background:#f5f5f5;"></div>
<svg class="b" style="left:15.20px;top:199.96px" width="6.4" height="6.2" viewBox="0 0 6.4 6.2"><rect x="0.4" y="0.4" width="5.6" height="5.4" rx="0.8" fill="#d9d9d9" stroke="#a9a9a9" stroke-width="0.8"/><path d="M1.6 3.1 H4.8" stroke="#6a6a6a" stroke-width="0.9"/></svg><div class="t" style="top:198px;font-size:7.33px;color:#3c3c3c;font-weight:bold;font-family:'DejaVu Sans Condensed', 'DejaVu Sans', sans-serif;left:25.00px;">User: max (3 Items)</div>
<div class="b" style="left:13.75px;top:209.56px;width:760.00px;height:1.30px;background:#d3d3d3;"></div>
<div class="t" style="top:212px;font-size:7.88px;color:#3c3c3c;left:18.75px;">max</div>
<div class="t" style="top:212px;font-size:7.88px;color:#3c3c3c;left:85.95px;">Draft Diversified Energy Inc</div>
<div class="t" style="top:212px;font-size:7.88px;color:#3c3c3c;left:219.60px;">Draft Diversified Energy Inc</div>
<div class="t" style="top:212px;font-size:7.88px;color:#3c3c3c;left:379.65px;">Proposal/Price Quot...</div>
<div class="t" style="top:212px;font-size:7.88px;color:#3c3c3c;left:346.43px;width:300px;text-align:center;">60</div>
<div class="t" style="top:212px;font-size:7.88px;color:#3c3c3c;left:534.00px;">27.02.2021</div>
<div class="t" style="top:212px;font-size:7.88px;color:#3c3c3c;left:614.55px;">2021 Q1</div>
<div class="t" style="top:212px;font-size:7.88px;color:#3c3c3c;left:442.25px;width:300px;text-align:right;">€21.893</div>
<div class="b" style="left:13.75px;top:223.96px;width:760.00px;height:0.80px;background:#f5f5f5;"></div>
<div class="t" style="top:226px;font-size:7.88px;color:#3c3c3c;left:18.75px;">max</div>
<div class="t" style="top:226px;font-size:7.88px;color:#3c3c3c;left:85.95px;">Draft Diversified Energy Inc</div>
<div class="t" style="top:226px;font-size:7.88px;color:#3c3c3c;left:219.60px;">Draft Diversified Energy Inc</div>
<div class="t" style="top:226px;font-size:7.88px;color:#3c3c3c;left:379.65px;">Qualification (20%)</div>
<div class="t" style="top:226px;font-size:7.88px;color:#3c3c3c;left:346.43px;width:300px;text-align:center;">20</div>
<div class="t" style="top:226px;font-size:7.88px;color:#3c3c3c;left:534.00px;">01.03.2021</div>
<div class="t" style="top:226px;font-size:7.88px;color:#3c3c3c;left:614.55px;">2021 Q1</div>
<div class="t" style="top:226px;font-size:7.88px;color:#3c3c3c;left:442.25px;width:300px;text-align:right;">€187.024</div>
<div class="b" style="left:13.75px;top:237.88px;width:760.00px;height:0.80px;background:#f5f5f5;"></div>
<div class="t" style="top:240px;font-size:7.88px;color:#3c3c3c;left:18.75px;">max</div>
<div class="t" style="top:240px;font-size:7.88px;color:#3c3c3c;left:85.95px;">Draft Diversified Energy Inc</div>
<div class="t" style="top:240px;font-size:7.88px;color:#3c3c3c;left:219.60px;">Draft Diversified Energy Inc</div>
<div class="t" style="top:240px;font-size:7.88px;color:#3c3c3c;left:379.65px;">Qualification (20%)</div>
<div class="t" style="top:240px;font-size:7.88px;color:#3c3c3c;left:346.43px;width:300px;text-align:center;">20</div>
<div class="t" style="top:240px;font-size:7.88px;color:#3c3c3c;left:534.00px;">23.11.2021</div>
<div class="t" style="top:240px;font-size:7.88px;color:#3c3c3c;left:614.55px;">2021 Q4</div>
<div class="t" style="top:240px;font-size:7.88px;color:#3c3c3c;left:442.25px;width:300px;text-align:right;">€255.774</div>
<div class="b" style="left:13.75px;top:251.80px;width:760.00px;height:0.80px;background:#f5f5f5;"></div>
<svg class="b" style="left:15.20px;top:273.42px" width="6.4" height="6.2" viewBox="0 0 6.4 6.2"><rect x="0.4" y="0.4" width="5.6" height="5.4" rx="0.8" fill="#d9d9d9" stroke="#a9a9a9" stroke-width="0.8"/><path d="M1.6 3.1 H4.8" stroke="#6a6a6a" stroke-width="0.9"/></svg><div class="t" style="top:271px;font-size:7.33px;color:#3c3c3c;font-weight:bold;font-family:'DejaVu Sans Condensed', 'DejaVu Sans', sans-serif;left:25.00px;">User: sally (5 Items)</div>
<div class="b" style="left:13.75px;top:283.02px;width:760.00px;height:1.30px;background:#d3d3d3;"></div>
<div class="t" style="top:286px;font-size:7.88px;color:#3c3c3c;left:18.75px;">sally</div>
<div class="t" style="top:286px;font-size:7.88px;color:#3c3c3c;left:85.95px;">Gifted Holdings AG</div>
<div class="t" style="top:286px;font-size:7.88px;color:#3c3c3c;left:219.60px;">Gifted Holdings AG</div>
<div class="t" style="top:286px;font-size:7.88px;color:#3c3c3c;left:379.65px;">Closed Won (100%)</div>
<div class="t" style="top:286px;font-size:7.88px;color:#3c3c3c;left:346.43px;width:300px;text-align:center;">100</div>
<div class="t" style="top:286px;font-size:7.88px;color:#3c3c3c;left:534.00px;">10.11.2020</div>
<div class="t" style="top:286px;font-size:7.88px;color:#3c3c3c;left:614.55px;">2020 Q4</div>
<div class="t" style="top:286px;font-size:7.88px;color:#3c3c3c;left:442.25px;width:300px;text-align:right;">€163.350</div>
<div class="b" style="left:13.75px;top:297.42px;width:760.00px;height:0.80px;background:#f5f5f5;"></div>
<div class="t" style="top:299px;font-size:7.88px;color:#3c3c3c;left:18.75px;">sally</div>
<div class="t" style="top:299px;font-size:7.88px;color:#3c3c3c;left:85.95px;">Smith &amp; Sons</div>
<div class="t" style="top:299px;font-size:7.88px;color:#3c3c3c;left:219.60px;">Smith &amp; Sons</div>
<div class="t" style="top:299px;font-size:7.88px;color:#3c3c3c;left:379.65px;">Closed Won (100%)</div>
<div class="t" style="top:299px;font-size:7.88px;color:#3c3c3c;left:346.43px;width:300px;text-align:center;">100</div>
<div class="t" style="top:299px;font-size:7.88px;color:#3c3c3c;left:534.00px;">05.02.2021</div>
<div class="t" style="top:299px;font-size:7.88px;color:#3c3c3c;left:614.55px;">2021 Q1</div>
<div class="t" style="top:299px;font-size:7.88px;color:#3c3c3c;left:442.25px;width:300px;text-align:right;">€180.149</div>
<div class="b" style="left:13.75px;top:311.34px;width:760.00px;height:0.80px;background:#f5f5f5;"></div>
</div><div class="b" style="left:13.00px;top:368.70px;width:0.90px;height:331.20px;background:#dedede;"></div>
<div class="b" style="left:13.90px;top:673.20px;width:760.00px;height:8.40px;background:#f1f1f1;"></div>
<div class="b" style="left:24.30px;top:673.20px;width:760.00px;height:8.40px;background:#c1c1c1;"></div>
<div class="b" style="left:16.4px;top:675.6px;width:0;height:0;border-top:1.8px solid transparent;border-bottom:1.8px solid transparent;border-right:2.6px solid #8a8a8a"></div>
<div class="b" style="left:13.90px;top:681.60px;width:760.00px;height:18.20px;background:linear-gradient(#e9e9e9,#f2f2f2);border-bottom:0.9px solid #d4d4d4;box-sizing:border-box;"></div>
<svg class="b" style="left:17.80px;top:685.60px" width="10" height="11" viewBox="0 0 10 11"><path d="M0.8 0.6 H6.2 L9 3.4 V10.4 H0.8 Z" fill="#eef4fc" stroke="#7ea6dc" stroke-width="0.8"/><path d="M6.2 0.6 V3.4 H9" fill="none" stroke="#7ea6dc" stroke-width="0.7"/><rect x="3.6" y="5.6" width="5.6" height="4.6" fill="#d5e4f7" stroke="#7ea6dc" stroke-width="0.6"/></svg><div class="b" style="left:263.40px;top:92.70px;width:145.20px;height:68.00px;background:#f0f0f0;border:0.9px solid #a8a8a8;box-sizing:border-box;box-shadow:1.5px 1.5px 2.5px rgba(0,0,0,.28);border-radius:1px;"></div>
<div class="b" style="left:287.50px;top:97.60px;width:79.20px;height:11.60px;background:#fff;border:0.8px solid #dedede;box-sizing:border-box;"></div>
<div class="t" style="top:97px;font-size:7.85px;color:#7c7c7c;left:289.80px;">2021-01-01</div>
<div class="b" style="left:366.70px;top:97.60px;width:8.60px;height:11.60px;background:linear-gradient(#f2f2f2,#d6d6d6);border:0.8px solid #b5b5b5;box-sizing:border-box;"></div>
<div class="b" style="left:266.00px;top:114.20px;width:140.00px;height:0.90px;background:#e2e2e2;"></div>
<svg class="b" style="left:272.40px;top:121.40px" width="10" height="10" viewBox="0 0 10 10"><path d="M0.4 9.4 L1.6 6.4 H8.4 L9.6 9.4 Z" fill="#6f7073"/><rect x="1.6" y="1.4" width="6.8" height="5.2" fill="#c7c9cc" stroke="#8f9194" stroke-width="0.6"/><circle cx="5" cy="3.4" r="1.4" fill="#a7a9ac"/><path d="M2.6 6.4 Q5 3.8 7.4 6.4 Z" fill="#9d9fa2"/></svg><div class="t" style="top:120px;font-size:8.4px;color:#3a3a3a;left:287.50px;">Take Snapshot</div>
<div class="b" style="left:266.00px;top:136.80px;width:140.00px;height:0.90px;background:#e4e4e4;"></div>
<svg class="b" style="left:271.20px;top:144.40px" width="11" height="10" viewBox="0 0 11 10"><path d="M0.6 9.6 V4.6 L3.4 3.8 V9.6 Z" fill="#d9534f"/><path d="M3.6 9.6 V2 L6 0.6 L7.4 2.4 V9.6 Z" fill="#4f8fd6"/><path d="M6.4 9.6 L8.6 4.6 L10.6 6 V9.6 Z" fill="#f0c23a"/><path d="M0.4 9.7 H10.8" stroke="#8a8a8a" stroke-width="0.6"/></svg><div class="t" style="top:143px;font-size:8.58px;color:#3a3a3a;left:287.30px;">Chart by Chart Comparison</div>
<svg class="b" style="left:368.60px;top:95.00px" width="15.2" height="20.4" viewBox="0 0 15.2 20.4"><path d="M5.2 1.2 C5.2 0.2 7 0.2 7 1.2 V7.6 L7.6 7.6 V6.2 C7.6 5.2 9.4 5.2 9.4 6.2 V7.8 L10 7.8 V7 C10 6 11.8 6 11.8 7 V8.4 L12.4 8.4 V8 C12.4 7 14 7 14 8 V13.4 C14 16.6 12.6 19.4 12.6 19.4 H6.4 C5.4 17 2.6 14.4 1.4 12.6 C0.6 11.4 2 10.2 3.2 11.4 L5.2 13.4 Z" fill="#fff" stroke="#222" stroke-width="1" stroke-linejoin="round"/></svg></div>
<div class="pane" style="left:770px;width:766px"><div class="b" style="left:0.00px;top:27.30px;width:768.00px;height:1.20px;background:#e4e4e4;"></div>
<svg class="b" style="left:13.90px;top:5.70px" width="16" height="14.2" viewBox="0 0 16 14.2"><path d="M0.5 9.4 L8 12.0 L15.5 9.4 L15.5 10.9 L8 13.8 L0.5 10.9 Z" fill="#7ab82d" stroke="#7ab82d" stroke-width="0.6" stroke-linejoin="round"/><path d="M0.5 6.6 L8 9.2 L15.5 6.6 L15.5 8.2 L8 11.1 L0.5 8.2 Z" fill="#e9842a" stroke="#e9842a" stroke-width="0.6" stroke-linejoin="round"/><path d="M0.5 3.4 L8 0.4 L15.5 3.4 L15.5 5.3 L8 8.3 L0.5 5.3 Z" fill="#1a85c7" stroke="#1a85c7" stroke-width="0.6" stroke-linejoin="round"/></svg><svg class="b" style="left:34.30px;top:12.10px" width="5.0" height="3.0" viewBox="0 0 5.0 3.0"><path d="M0 0 H5.0 L2.5 3.0 Z" fill="#111"/></svg><div class="t" style="top:8px;font-size:8.2px;color:#3d3d3d;letter-spacing:-0.08px;left:62.00px;">Accounts</div>
<svg class="b" style="left:102.70px;top:12.10px" width="5.0" height="3.0" viewBox="0 0 5.0 3.0"><path d="M0 0 H5.0 L2.5 3.0 Z" fill="#111"/></svg><div class="t" style="top:8px;font-size:8.2px;color:#3d3d3d;letter-spacing:-0.08px;left:122.70px;">Contacts</div>
<svg class="b" style="left:162.00px;top:12.10px" width="5.0" height="3.0" viewBox="0 0 5.0 3.0"><path d="M0 0 H5.0 L2.5 3.0 Z" fill="#111"/></svg><div class="t" style="top:8px;font-size:8.2px;color:#3d3d3d;letter-spacing:0.2px;left:181.70px;">Opportunities</div>
<svg class="b" style="left:241.00px;top:12.10px" width="5.0" height="3.0" viewBox="0 0 5.0 3.0"><path d="M0 0 H5.0 L2.5 3.0 Z" fill="#111"/></svg><div class="b" style="left:253.20px;top:0.00px;width:89.80px;height:27.30px;background:#e9ecef;"></div>
<div class="t" style="top:8px;font-size:8.2px;color:#3d3d3d;letter-spacing:0.03px;left:260.70px;">Kinamu Reporter</div>
<svg class="b" style="left:331.20px;top:12.10px" width="5.0" height="3.0" viewBox="0 0 5.0 3.0"><path d="M0 0 H5.0 L2.5 3.0 Z" fill="#111"/></svg><div class="b" style="left:551.00px;top:0.00px;width:1.00px;height:27.30px;background:#f3f3f3;"></div>
<div class="t" style="top:8px;font-size:8.3px;color:#c4c4c4;left:556.00px;">Search</div>
<svg class="b" style="left:650.80px;top:8.60px" width="10" height="10" viewBox="0 0 10 10"><circle cx="4.1" cy="4.1" r="3.0" fill="none" stroke="#1a1a1a" stroke-width="1.3"/><path d="M6.3 6.3 L8.9 8.7" stroke="#1a1a1a" stroke-width="1.6" stroke-linecap="round"/></svg><svg class="b" style="left:673.00px;top:3.00px" width="21" height="21" viewBox="0 0 21 21"><circle cx="10.35" cy="10.3" r="9.4" fill="#fdd1d4"/></svg><div class="t" style="top:8px;font-size:6.9px;color:#a8485c;left:533.40px;width:300px;text-align:center;">1</div>
<svg class="b" style="left:708.80px;top:4.40px" width="12.8" height="18" viewBox="0 0 12.8 18"><path d="M1.3 8.4 C0.2 2.6 3 0.1 6.3 0.1 C9.6 0.1 12.3 2.6 11.3 8.4 L10.2 8.4 C10.6 5 9 3.5 6.3 3.5 C3.6 3.5 2 5 2.4 8.4 Z" fill="#3b2a26"/><path d="M2.1 7.2 C2.1 4.5 3.8 3.1 6.3 3.1 C8.8 3.1 10.5 4.5 10.5 7.2 C10.5 10.8 9.5 13 8.9 14.6 L8.9 18 L3.7 18 L3.7 14.6 C3.1 13 2.1 10.8 2.1 7.2 Z" fill="#f3d6cb"/><path d="M0.3 16.2 L2.9 13.5 M9.8 13.5 L12.4 16.6" stroke="#3f4139" stroke-width="1.5" stroke-linecap="round"/><path d="M7.2 14 L8.6 13.2 L8.4 16 Z" fill="#e9b48c"/><path d="M4.6 11.4 Q6.3 12.6 8 11.4" stroke="#fff" stroke-width="0.7" fill="none"/></svg><svg class="b" style="left:727.20px;top:12.20px" width="5.4" height="3.2" viewBox="0 0 5.4 3.2"><path d="M0 0 H5.4 L2.7 3.2 Z" fill="#111"/></svg><svg class="b" style="left:746.20px;top:7.30px" width="10.8" height="10.2" viewBox="0 0 10.8 10.2"><path d="M0 3.9 H4.1 V0 H6.7 V3.9 H10.8 V6.4 H6.7 V10.2 H4.1 V6.4 H0 Z" fill="#000"/></svg><div class="t" style="top:37px;font-size:11.86px;color:#6a6a6a;left:13.60px;">Sample Report #8:Opportunities by Quarters</div>
<svg class="b" style="left:252.20px;top:35.40px" width="11.6" height="11.6" viewBox="0 0 11.6 11.6"><path d="M5.8 1.2 L7.4 4.0 L10.6 4.6 L8.5 7.0 L9.0 10.3 L5.8 9.2 L2.6 10.3 L3.1 7.0 L1.0 4.6 L4.2 4.0 Z" fill="#e2e2e2" stroke="#d6d6d6" stroke-width="1.6" stroke-linejoin="round"/></svg><div class="b" style="left:13.30px;top:77.00px;width:760.00px;height:17.00px;background:linear-gradient(#eeeeee,#e9e9e9);"></div>
<svg class="b" style="left:18.20px;top:80.00px" width="10" height="10" viewBox="0 0 10 10"><rect x="1.2" y="0.9" width="7.4" height="8.5" fill="#fcfbf8" stroke="#d3ccc0" stroke-width="0.7"/><rect x="0.3" y="0.5" width="1.5" height="9.2" fill="#c4733c"/><path d="M3.2 2.6 H5.4 M3.2 4 H4.6" stroke="#8db3e6" stroke-width="0.9"/><path d="M3.4 5.9 L4.9 7.7 L9.2 2.2" stroke="#e9a22e" stroke-width="1.5" fill="none"/></svg><div class="t" style="top:79px;font-size:7.28px;color:#3a3a3a;left:29.30px;">Edit</div>
<svg class="b" style="left:47.80px;top:80.00px" width="10" height="10" viewBox="0 0 10 10"><rect x="1.2" y="0.9" width="7" height="8.5" fill="#f7f5f1" stroke="#d3ccc0" stroke-width="0.7"/><rect x="0.3" y="0.5" width="1.5" height="9.2" fill="#c4733c"/><path d="M3.4 2.8 H6.6 M3.4 4.4 H5.6" stroke="#7ea6de" stroke-width="1"/><circle cx="7.1" cy="7.5" r="2.3" fill="#e96b2b"/></svg><div class="t" style="top:79px;font-size:7.28px;color:#3a3a3a;left:58.70px;">Delete</div>
<div class="b" style="left:84.20px;top:80.20px;width:0.90px;height:9.00px;background:#d2d2d2;"></div>
<svg class="b" style="left:89.80px;top:80.00px" width="10.4" height="10.4" viewBox="0 0 10.4 10.4"><circle cx="5.2" cy="5.2" r="4.9" fill="#63b057"/><circle cx="5.2" cy="5.2" r="3.6" fill="#86c97a"/><path d="M5.2 2.9 V7.5 M2.9 5.2 H7.5" stroke="#f4fbf2" stroke-width="1.7"/></svg><div class="t" style="top:79px;font-size:7.28px;color:#3a3a3a;left:102.20px;">To Favorites</div>
<svg class="b" style="left:146.60px;top:80.20px" width="10" height="10" viewBox="0 0 10 10"><circle cx="5" cy="5" r="4.7" fill="#e2544f"/><circle cx="5" cy="5" r="3.5" fill="#ee7a74"/><path d="M2.7 5 H7.3" stroke="#fdf0ef" stroke-width="1.7"/></svg><div class="t" style="top:79px;font-size:7.28px;color:#3a3a3a;left:158.20px;">Delete favorite</div>
<div class="b" style="left:210.40px;top:80.20px;width:0.90px;height:9.00px;background:#d2d2d2;"></div>
<svg class="b" style="left:215.60px;top:79.80px" width="10" height="11" viewBox="0 0 10 11"><path d="M1 8.2 H9 V10.2 H1 Z" fill="#c9ccd2" stroke="#9aa0aa" stroke-width="0.5"/><path d="M5 7.6 L1.6 4.2 H3.6 V0.8 H6.4 V4.2 H8.4 Z" fill="#2f9fe6" stroke="#2b8ad0" stroke-width="0.3"/></svg><div class="t" style="top:79px;font-size:7.28px;color:#3a3a3a;left:227.40px;">Export</div>
<svg class="b" style="left:249.60px;top:84.30px" width="3.8" height="2.4" viewBox="0 0 3.8 2.4"><path d="M0 0 H3.8 L1.9 2.4 Z" fill="#222"/></svg><div class="b" style="left:258.90px;top:80.20px;width:0.90px;height:9.00px;background:#d2d2d2;"></div>
<svg class="b" style="left:266.60px;top:80.00px" width="10" height="10" viewBox="0 0 10 10"><path d="M0.4 9.4 L1.6 6.4 H8.4 L9.6 9.4 Z" fill="#6f7073"/><rect x="1.6" y="1.4" width="6.8" height="5.2" fill="#c7c9cc" stroke="#8f9194" stroke-width="0.6"/><circle cx="5" cy="3.4" r="1.4" fill="#a7a9ac"/><path d="M2.6 6.4 Q5 3.8 7.4 6.4 Z" fill="#9d9fa2"/></svg><div class="t" style="top:79px;font-size:7.28px;color:#3a3a3a;left:277.40px;">Snapshots</div>
<svg class="b" style="left:312.90px;top:84.30px" width="3.8" height="2.4" viewBox="0 0 3.8 2.4"><path d="M0 0 H3.8 L1.9 2.4 Z" fill="#222"/></svg><div class="b" style="left:323.30px;top:80.20px;width:0.90px;height:9.00px;background:#d2d2d2;"></div>
<svg class="b" style="left:328.00px;top:79.80px" width="11.4" height="10" viewBox="0 0 11.4 10"><path d="M1.6 9 L7.4 3.2" stroke="#6a8fe0" stroke-width="2.6" stroke-linecap="round"/><path d="M6.4 2.8 L8.2 0.8 L10.8 1.6 L9.6 3.4 L10.4 4.4" stroke="#b9bdc6" stroke-width="1.4" fill="none" stroke-linecap="round"/></svg><div class="t" style="top:79px;font-size:7.28px;color:#3a3a3a;left:341.00px;">Tools</div>
<svg class="b" style="left:359.00px;top:84.30px" width="3.8" height="2.4" viewBox="0 0 3.8 2.4"><path d="M0 0 H3.8 L1.9 2.4 Z" fill="#222"/></svg><svg class="b" style="left:41.60px;top:165.00px" width="302.90" height="186" viewBox="0 0 302.90 186"><rect x="2.00" y="6.20" width="298.90" height="1.00" fill="#e2e2e2"/><rect x="2.00" y="159.16" width="298.90" height="1.00" fill="#e4e4e4"/><rect x="2.00" y="138.32" width="298.90" height="1.00" fill="#e4e4e4"/><rect x="2.00" y="117.48" width="298.90" height="1.00" fill="#e4e4e4"/><rect x="2.00" y="96.64" width="298.90" height="1.00" fill="#e4e4e4"/><rect x="2.00" y="75.80" width="298.90" height="1.00" fill="#e4e4e4"/><rect x="2.00" y="54.96" width="298.90" height="1.00" fill="#e4e4e4"/><rect x="2.00" y="34.12" width="298.90" height="1.00" fill="#e4e4e4"/><rect x="2.00" y="13.29" width="298.90" height="1.00" fill="#e4e4e4"/><rect x="1.50" y="6.70" width="1.00" height="174.80" fill="#dedede"/><rect x="2.00" y="181.00" width="298.90" height="1.50" fill="#cccccc"/><rect x="28.10" y="156.20" width="39.20" height="24.30" fill="#fff"/><rect x="28.60" y="157.05" width="38.20" height="23.45" fill="#d62728"/><rect x="28.10" y="123.59" width="39.20" height="32.81" fill="#fff"/><rect x="28.60" y="124.44" width="38.20" height="31.31" fill="#2ca02c"/><rect x="79.60" y="157.90" width="39.20" height="22.60" fill="#fff"/><rect x="80.10" y="158.75" width="38.20" height="21.75" fill="#d62728"/><rect x="79.60" y="139.14" width="39.20" height="18.96" fill="#fff"/><rect x="80.10" y="139.99" width="38.20" height="17.46" fill="#2ca02c"/><rect x="79.60" y="115.28" width="39.20" height="24.06" fill="#fff"/><rect x="80.10" y="116.13" width="38.20" height="22.56" fill="#98df8a"/><rect x="79.60" y="75.89" width="39.20" height="39.59" fill="#fff"/><rect x="80.10" y="76.74" width="38.20" height="38.09" fill="#aec7e8"/><rect x="79.60" y="30.99" width="39.20" height="45.11" fill="#fff"/><rect x="80.10" y="31.84" width="38.20" height="43.61" fill="#1f77b4"/><rect x="79.60" y="6.50" width="39.20" height="24.69" fill="#fff"/><rect x="80.10" y="7.35" width="38.20" height="23.19" fill="#ff7f0e"/><rect x="131.40" y="163.94" width="39.20" height="16.56" fill="#fff"/><rect x="131.90" y="164.79" width="38.20" height="15.71" fill="#98df8a"/><rect x="131.40" y="134.25" width="39.20" height="29.90" fill="#fff"/><rect x="131.90" y="135.10" width="38.20" height="28.40" fill="#aec7e8"/><rect x="131.40" y="50.68" width="39.20" height="83.77" fill="#fff"/><rect x="131.90" y="51.53" width="38.20" height="82.27" fill="#ff7f0e"/><rect x="183.30" y="157.69" width="39.20" height="22.81" fill="#fff"/><rect x="183.80" y="158.54" width="38.20" height="21.96" fill="#aec7e8"/><rect x="183.30" y="106.42" width="39.20" height="51.46" fill="#fff"/><rect x="183.80" y="107.27" width="38.20" height="49.96" fill="#1f77b4"/><rect x="234.80" y="104.76" width="39.20" height="75.74" fill="#fff"/><rect x="235.30" y="105.61" width="38.20" height="74.89" fill="#1f77b4"/><rect x="234.80" y="51.20" width="39.20" height="53.76" fill="#fff"/><rect x="235.30" y="52.05" width="38.20" height="52.26" fill="#ff7f0e"/></svg><div class="t" style="top:104px;font-size:8.0px;color:#3c3c3c;font-weight:bold;letter-spacing:0.29px;left:21.00px;">Expected Closing By Quarters</div>
<svg class="b" style="left:11.00px;top:115px" width="260" height="50" viewBox="0 0 260 50"><circle cx="20.25" cy="9.60" r="4.05" fill="#fff" stroke="#2f2f2f" stroke-width="1.25"/><circle cx="20.25" cy="25.50" r="4.65" fill="#3a3a3a"/><circle cx="124.40" cy="9.60" r="4.65" fill="#d62728"/><circle cx="227.50" cy="9.60" r="4.65" fill="#2ca02c"/><circle cx="124.40" cy="25.50" r="4.65" fill="#98df8a"/><circle cx="227.50" cy="25.50" r="4.65" fill="#aec7e8"/><circle cx="124.40" cy="41.50" r="4.65" fill="#1f77b4"/><circle cx="227.50" cy="41.50" r="4.65" fill="#ff7f0e"/></svg><div class="t" style="top:119px;font-size:7.34px;color:#555;left:38.75px;">Grouped</div>
<div class="t" style="top:135px;font-size:7.34px;color:#555;left:38.75px;">Stacked</div>
<div class="t" style="top:119px;font-size:7.34px;color:#555;left:143.00px;">Closed Lost (0%)</div>
<div class="t" style="top:119px;font-size:7.34px;color:#555;left:246.10px;">Closed Won (100%)</div>
<div class="t" style="top:135px;font-size:7.34px;color:#555;left:143.00px;">Negotiation/Review (80%)</div>
<div class="t" style="top:135px;font-size:7.34px;color:#555;left:246.10px;">Proposal/Price Quote (60%)</div>
<div class="t" style="top:151px;font-size:7.34px;color:#555;left:143.00px;">Id. Decision Makers (40%)</div>
<div class="t" style="top:151px;font-size:7.34px;color:#555;left:246.10px;">Qualification (20%)</div>
<div class="t" style="top:319px;font-size:7.25px;color:#666;left:-259.70px;width:300px;text-align:right;">0,2M</div>
<div class="t" style="top:298px;font-size:7.25px;color:#666;left:-259.70px;width:300px;text-align:right;">0,4M</div>
<div class="t" style="top:277px;font-size:7.25px;color:#666;left:-259.70px;width:300px;text-align:right;">0,6M</div>
<div class="t" style="top:256px;font-size:7.25px;color:#666;left:-259.70px;width:300px;text-align:right;">0,8M</div>
<div class="t" style="top:235px;font-size:7.25px;color:#666;left:-259.70px;width:300px;text-align:right;">1,0M</div>
<div class="t" style="top:214px;font-size:7.25px;color:#666;left:-259.70px;width:300px;text-align:right;">1,2M</div>
<div class="t" style="top:194px;font-size:7.25px;color:#666;left:-259.70px;width:300px;text-align:right;">1,4M</div>
<div class="t" style="top:165px;font-size:7.15px;color:#3a3a3a;font-weight:bold;left:-259.70px;width:300px;text-align:right;">1,67M</div>
<div class="t" style="top:340px;font-size:7.15px;color:#3a3a3a;font-weight:bold;left:-259.70px;width:300px;text-align:right;">0,00M</div>
<div class="t" style="top:323px;font-size:8.66px;color:#fff;left:-60.70px;width:300px;text-align:center;">231k</div>
<div class="t" style="top:290px;font-size:8.66px;color:#fff;left:-60.70px;width:300px;text-align:center;">313k</div>
<div class="t" style="top:347px;font-size:7.3px;color:#555;left:-60.70px;width:300px;text-align:center;">2020 Q4</div>
<div class="t" style="top:324px;font-size:8.66px;color:#fff;left:-9.20px;width:300px;text-align:center;">215k</div>
<div class="t" style="top:305px;font-size:8.66px;color:#fff;left:-9.20px;width:300px;text-align:center;">180k</div>
<div class="t" style="top:282px;font-size:8.66px;color:#222;left:-9.20px;width:300px;text-align:center;">229k</div>
<div class="t" style="top:242px;font-size:8.66px;color:#222;left:-9.20px;width:300px;text-align:center;">378k</div>
<div class="t" style="top:197px;font-size:8.66px;color:#fff;left:-9.20px;width:300px;text-align:center;">431k</div>
<div class="t" style="top:173px;font-size:8.66px;color:#222;left:-9.20px;width:300px;text-align:center;">235k</div>
<div class="t" style="top:347px;font-size:7.3px;color:#555;left:-9.20px;width:300px;text-align:center;">2021 Q1</div>
<div class="t" style="top:330px;font-size:8.66px;color:#222;left:42.60px;width:300px;text-align:center;">157k</div>
<div class="t" style="top:301px;font-size:8.66px;color:#222;left:42.60px;width:300px;text-align:center;">285k</div>
<div class="t" style="top:217px;font-size:8.66px;color:#222;left:42.60px;width:300px;text-align:center;">802k</div>
<div class="t" style="top:347px;font-size:7.3px;color:#555;left:42.60px;width:300px;text-align:center;">2021 Q2</div>
<div class="t" style="top:324px;font-size:8.66px;color:#222;left:94.50px;width:300px;text-align:center;">217k</div>
<div class="t" style="top:273px;font-size:8.66px;color:#fff;left:94.50px;width:300px;text-align:center;">492k</div>
<div class="t" style="top:347px;font-size:7.3px;color:#555;left:94.50px;width:300px;text-align:center;">2021 Q3</div>
<div class="t" style="top:271px;font-size:8.66px;color:#fff;left:146.00px;width:300px;text-align:center;">725k</div>
<div class="t" style="top:218px;font-size:8.66px;color:#222;left:146.00px;width:300px;text-align:center;">514k</div>
<div class="t" style="top:347px;font-size:7.3px;color:#555;left:146.00px;width:300px;text-align:center;">2021 Q4</div>
<svg class="b" style="left:384.00px;top:165.00px" width="296.10" height="186" viewBox="0 0 296.10 186"><rect x="2.00" y="6.20" width="292.10" height="1.00" fill="#e2e2e2"/><rect x="2.00" y="150.51" width="292.10" height="1.00" fill="#e4e4e4"/><rect x="2.00" y="121.02" width="292.10" height="1.00" fill="#e4e4e4"/><rect x="2.00" y="91.53" width="292.10" height="1.00" fill="#e4e4e4"/><rect x="2.00" y="62.04" width="292.10" height="1.00" fill="#e4e4e4"/><rect x="2.00" y="32.55" width="292.10" height="1.00" fill="#e4e4e4"/><rect x="1.50" y="6.70" width="1.00" height="174.80" fill="#dedede"/><rect x="2.00" y="181.00" width="292.10" height="1.50" fill="#cccccc"/><rect x="25.40" y="147.42" width="38.80" height="33.08" fill="#fff"/><rect x="25.90" y="148.27" width="37.80" height="32.23" fill="#98df8a"/><rect x="25.40" y="128.25" width="38.80" height="19.37" fill="#fff"/><rect x="25.90" y="129.10" width="37.80" height="17.87" fill="#aec7e8"/><rect x="77.20" y="127.22" width="38.80" height="53.28" fill="#fff"/><rect x="77.70" y="128.07" width="37.80" height="52.43" fill="#2ca02c"/><rect x="77.20" y="92.42" width="38.80" height="35.00" fill="#fff"/><rect x="77.70" y="93.27" width="37.80" height="33.50" fill="#98df8a"/><rect x="77.20" y="6.49" width="38.80" height="86.13" fill="#fff"/><rect x="77.70" y="7.34" width="37.80" height="84.63" fill="#aec7e8"/><rect x="129.10" y="116.90" width="38.80" height="63.60" fill="#fff"/><rect x="129.60" y="117.75" width="37.80" height="62.75" fill="#d62728"/><rect x="129.10" y="102.74" width="38.80" height="14.36" fill="#fff"/><rect x="129.60" y="103.59" width="37.80" height="12.86" fill="#ff7f0e"/><rect x="180.90" y="173.84" width="38.80" height="6.66" fill="#fff"/><rect x="181.40" y="174.69" width="37.80" height="5.81" fill="#aec7e8"/><rect x="180.90" y="118.70" width="38.80" height="55.35" fill="#fff"/><rect x="181.40" y="119.55" width="37.80" height="53.85" fill="#ff7f0e"/><rect x="232.70" y="53.20" width="38.80" height="127.30" fill="#fff"/><rect x="233.20" y="54.05" width="37.80" height="126.45" fill="#1f77b4"/></svg><div class="t" style="top:104px;font-size:8.0px;color:#3c3c3c;font-weight:bold;letter-spacing:0.29px;left:357.25px;">Expected Closing Within Current Quarter</div>
<svg class="b" style="left:347.25px;top:115px" width="260" height="50" viewBox="0 0 260 50"><circle cx="20.25" cy="9.60" r="4.05" fill="#fff" stroke="#2f2f2f" stroke-width="1.25"/><circle cx="20.25" cy="25.50" r="4.65" fill="#3a3a3a"/><circle cx="124.35" cy="9.60" r="4.65" fill="#d62728"/><circle cx="227.85" cy="9.60" r="4.65" fill="#2ca02c"/><circle cx="124.35" cy="25.50" r="4.65" fill="#98df8a"/><circle cx="227.85" cy="25.50" r="4.65" fill="#aec7e8"/><circle cx="124.35" cy="41.50" r="4.65" fill="#1f77b4"/><circle cx="227.85" cy="41.50" r="4.65" fill="#ff7f0e"/></svg><div class="t" style="top:119px;font-size:7.34px;color:#555;left:375.00px;">Grouped</div>
<div class="t" style="top:135px;font-size:7.34px;color:#555;left:375.00px;">Stacked</div>
<div class="t" style="top:119px;font-size:7.34px;color:#555;left:479.20px;">Closed Lost (0%)</div>
<div class="t" style="top:119px;font-size:7.34px;color:#555;left:582.70px;">Closed Won (100%)</div>
<div class="t" style="top:135px;font-size:7.34px;color:#555;left:479.20px;">Negotiation/Review (80%)</div>
<div class="t" style="top:135px;font-size:7.34px;color:#555;left:582.70px;">Proposal/Price Quote (60%)</div>
<div class="t" style="top:151px;font-size:7.34px;color:#555;left:479.20px;">Id. Decision Makers (40%)</div>
<div class="t" style="top:151px;font-size:7.34px;color:#555;left:582.70px;">Qualification (20%)</div>
<div class="t" style="top:310px;font-size:7.25px;color:#666;left:82.70px;width:300px;text-align:right;">100k</div>
<div class="t" style="top:280px;font-size:7.25px;color:#666;left:82.70px;width:300px;text-align:right;">200k</div>
<div class="t" style="top:251px;font-size:7.25px;color:#666;left:82.70px;width:300px;text-align:right;">300k</div>
<div class="t" style="top:221px;font-size:7.25px;color:#666;left:82.70px;width:300px;text-align:right;">400k</div>
<div class="t" style="top:192px;font-size:7.25px;color:#666;left:82.70px;width:300px;text-align:right;">500k</div>
<div class="t" style="top:165px;font-size:7.15px;color:#3a3a3a;font-weight:bold;left:82.70px;width:300px;text-align:right;">589,36k</div>
<div class="t" style="top:340px;font-size:7.15px;color:#3a3a3a;font-weight:bold;left:82.70px;width:300px;text-align:right;">0,00k</div>
<div class="t" style="top:314px;font-size:8.66px;color:#222;left:278.80px;width:300px;text-align:center;">111k</div>
<div class="t" style="top:295px;font-size:8.66px;color:#222;left:278.80px;width:300px;text-align:center;">65k</div>
<div class="t" style="top:347px;font-size:7.3px;color:#555;left:278.80px;width:300px;text-align:center;">chris</div>
<div class="t" style="top:294px;font-size:8.66px;color:#fff;left:330.60px;width:300px;text-align:center;">180k</div>
<div class="t" style="top:259px;font-size:8.66px;color:#222;left:330.60px;width:300px;text-align:center;">118k</div>
<div class="t" style="top:173px;font-size:8.66px;color:#222;left:330.60px;width:300px;text-align:center;">292k</div>
<div class="t" style="top:347px;font-size:7.3px;color:#555;left:330.60px;width:300px;text-align:center;">sally</div>
<div class="t" style="top:283px;font-size:8.66px;color:#fff;left:382.50px;width:300px;text-align:center;">215k</div>
<div class="t" style="top:269px;font-size:8.66px;color:#222;left:382.50px;width:300px;text-align:center;">48k</div>
<div class="t" style="top:347px;font-size:7.3px;color:#555;left:382.50px;width:300px;text-align:center;">sarah</div>
<div class="t" style="top:285px;font-size:8.66px;color:#222;left:434.30px;width:300px;text-align:center;">187k</div>
<div class="t" style="top:347px;font-size:7.3px;color:#555;left:434.30px;width:300px;text-align:center;">max</div>
<div class="t" style="top:220px;font-size:8.66px;color:#fff;left:486.10px;width:300px;text-align:center;">431k</div>
<div class="t" style="top:347px;font-size:7.3px;color:#555;left:486.10px;width:300px;text-align:center;">will</div>
<div class="b" style="left:0;top:367px;width:768px;height:306.2px;overflow:hidden"><div class="b" style="left:13.20px;top:0.90px;width:760.00px;height:16.00px;background:linear-gradient(#f1f1f1,#e7e7e7);border-top:0.8px solid #dedede;border-bottom:0.8px solid #d2d2d2;box-sizing:border-box;"></div>
<div class="b" style="left:13.75px;top:1.60px;width:67.40px;height:14.60px;background:linear-gradient(#e6e6e6,#dcdcdc);"></div>
<div class="t" style="top:4px;font-size:7.88px;color:#444;left:18.35px;">User</div>
<div class="b" style="left:80.65px;top:1.60px;width:0.90px;height:14.70px;background:#c6c6c6;"></div>
<div class="b" style="left:81.55px;top:1.60px;width:0.80px;height:14.70px;background:#f6f6f6;"></div>
<div class="t" style="top:4px;font-size:7.88px;color:#444;left:85.85px;">Account</div>
<div class="b" style="left:214.90px;top:1.60px;width:0.90px;height:14.70px;background:#c6c6c6;"></div>
<div class="b" style="left:215.80px;top:1.60px;width:0.80px;height:14.70px;background:#f6f6f6;"></div>
<div class="t" style="top:4px;font-size:7.88px;color:#444;left:220.10px;">Opportunity</div>
<div class="b" style="left:375.65px;top:1.60px;width:0.90px;height:14.70px;background:#c6c6c6;"></div>
<div class="b" style="left:376.55px;top:1.60px;width:0.80px;height:14.70px;background:#f6f6f6;"></div>
<div class="t" style="top:4px;font-size:7.88px;color:#444;left:380.85px;">Sales Stage</div>
<div class="b" style="left:462.15px;top:1.60px;width:0.90px;height:14.70px;background:#c6c6c6;"></div>
<div class="b" style="left:463.05px;top:1.60px;width:0.80px;height:14.70px;background:#f6f6f6;"></div>
<div class="t" style="top:4px;font-size:7.88px;color:#444;left:467.35px;">Probability</div>
<div class="b" style="left:528.90px;top:1.60px;width:0.90px;height:14.70px;background:#c6c6c6;"></div>
<div class="b" style="left:529.80px;top:1.60px;width:0.80px;height:14.70px;background:#f6f6f6;"></div>
<div class="t" style="top:4px;font-size:7.88px;color:#444;left:534.10px;">Expected Closing</div>
<div class="b" style="left:609.65px;top:1.60px;width:0.90px;height:14.70px;background:#c6c6c6;"></div>
<div class="b" style="left:610.55px;top:1.60px;width:0.80px;height:14.70px;background:#f6f6f6;"></div>
<div class="t" style="top:4px;font-size:7.88px;color:#444;left:614.85px;">Quarter</div>
<div class="b" style="left:676.65px;top:1.60px;width:0.90px;height:14.70px;background:#c6c6c6;"></div>
<div class="b" style="left:677.55px;top:1.60px;width:0.80px;height:14.70px;background:#f6f6f6;"></div>
<div class="t" style="top:4px;font-size:7.88px;color:#444;left:681.85px;">Amount</div>
<div class="b" style="left:744.15px;top:1.60px;width:0.90px;height:14.70px;background:#c6c6c6;"></div>
<div class="b" style="left:745.05px;top:1.60px;width:0.80px;height:14.70px;background:#f6f6f6;"></div>
<div class="t" style="top:4px;font-size:7.88px;color:#444;left:749.35px;">Currency</div>
<svg class="b" style="left:38.70px;top:8.30px" width="4.2" height="2.6" viewBox="0 0 4.2 2.6"><path d="M0 2.6 H4.2 L2.1 0.2 Z" fill="#777"/></svg><svg class="b" style="left:15.20px;top:25.20px" width="6.4" height="6.2" viewBox="0 0 6.4 6.2"><rect x="0.4" y="0.4" width="5.6" height="5.4" rx="0.8" fill="#d9d9d9" stroke="#a9a9a9" stroke-width="0.8"/><path d="M1.6 3.1 H4.8" stroke="#6a6a6a" stroke-width="0.9"/></svg><div class="t" style="top:23px;font-size:7.33px;color:#3c3c3c;font-weight:bold;font-family:'DejaVu Sans Condensed', 'DejaVu Sans', sans-serif;left:25.00px;">User: chris (7 Items)</div>
<div class="b" style="left:13.75px;top:34.80px;width:760.00px;height:1.30px;background:#d3d3d3;"></div>
<div class="t" style="top:37px;font-size:7.88px;color:#3c3c3c;left:18.75px;">chris</div>
<div class="t" style="top:37px;font-size:7.88px;color:#3c3c3c;left:85.95px;">Pullman Cart Company</div>
<div class="t" style="top:37px;font-size:7.88px;color:#3c3c3c;left:219.60px;">Pullman Cart Company</div>
<div class="t" style="top:37px;font-size:7.88px;color:#3c3c3c;left:379.65px;">Closed Lost (0%)</div>
<div class="t" style="top:37px;font-size:7.88px;color:#3c3c3c;left:346.43px;width:300px;text-align:center;">0</div>
<div class="t" style="top:37px;font-size:7.88px;color:#3c3c3c;left:534.00px;">29.11.2020</div>
<div class="t" style="top:37px;font-size:7.88px;color:#3c3c3c;left:614.55px;">2020 Q4</div>
<div class="t" style="top:37px;font-size:7.88px;color:#3c3c3c;left:442.25px;width:300px;text-align:right;">€231.250</div>
<div class="b" style="left:13.75px;top:49.20px;width:760.00px;height:0.80px;background:#f5f5f5;"></div>
<div class="t" style="top:51px;font-size:7.88px;color:#3c3c3c;left:18.75px;">chris</div>
<div class="t" style="top:51px;font-size:7.88px;color:#3c3c3c;left:85.95px;">Coolview Net Ltd</div>
<div class="t" style="top:51px;font-size:7.88px;color:#3c3c3c;left:219.60px;">Coolview Net Ltd</div>
<div class="t" style="top:51px;font-size:7.88px;color:#3c3c3c;left:379.65px;">Closed Won (100%)</div>
<div class="t" style="top:51px;font-size:7.88px;color:#3c3c3c;left:346.43px;width:300px;text-align:center;">100</div>
<div class="t" style="top:51px;font-size:7.88px;color:#3c3c3c;left:534.00px;">06.12.2020</div>
<div class="t" style="top:51px;font-size:7.88px;color:#3c3c3c;left:614.55px;">2020 Q4</div>
<div class="t" style="top:51px;font-size:7.88px;color:#3c3c3c;left:442.25px;width:300px;text-align:right;">€150.000</div>
<div class="b" style="left:13.75px;top:63.12px;width:760.00px;height:0.80px;background:#f5f5f5;"></div>
<div class="t" style="top:65px;font-size:7.88px;color:#3c3c3c;left:18.75px;">chris</div>
<div class="t" style="top:65px;font-size:7.88px;color:#3c3c3c;left:85.95px;">Coolview Net Ltd</div>
<div class="t" style="top:65px;font-size:7.88px;color:#3c3c3c;left:219.60px;">Coolview Net Ltd</div>
<div class="t" style="top:65px;font-size:7.88px;color:#3c3c3c;left:379.65px;">Negotiation/Review ...</div>
<div class="t" style="top:65px;font-size:7.88px;color:#3c3c3c;left:346.43px;width:300px;text-align:center;">80</div>
<div class="t" style="top:65px;font-size:7.88px;color:#3c3c3c;left:534.00px;">25.02.2021</div>
<div class="t" style="top:65px;font-size:7.88px;color:#3c3c3c;left:614.55px;">2021 Q1</div>
<div class="t" style="top:65px;font-size:7.88px;color:#3c3c3c;left:442.25px;width:300px;text-align:right;">€111.489</div>
<div class="b" style="left:13.75px;top:77.04px;width:760.00px;height:0.80px;background:#f5f5f5;"></div>
<div class="t" style="top:79px;font-size:7.88px;color:#3c3c3c;left:18.75px;">chris</div>
<div class="t" style="top:79px;font-size:7.88px;color:#3c3c3c;left:85.95px;">Pullman Cart Company</div>
<div class="t" style="top:79px;font-size:7.88px;color:#3c3c3c;left:219.60px;">Pullman Cart Company</div>
<div class="t" style="top:79px;font-size:7.88px;color:#3c3c3c;left:379.65px;">Proposal/Price Quot...</div>
<div class="t" style="top:79px;font-size:7.88px;color:#3c3c3c;left:346.43px;width:300px;text-align:center;">65</div>
<div class="t" style="top:79px;font-size:7.88px;color:#3c3c3c;left:534.00px;">31.03.2021</div>
<div class="t" style="top:79px;font-size:7.88px;color:#3c3c3c;left:614.55px;">2021 Q1</div>
<div class="t" style="top:79px;font-size:7.88px;color:#3c3c3c;left:442.25px;width:300px;text-align:right;">€65.000</div>
<div class="b" style="left:13.75px;top:90.96px;width:760.00px;height:0.80px;background:#f5f5f5;"></div>
<div class="t" style="top:93px;font-size:7.88px;color:#3c3c3c;left:18.75px;">chris</div>
<div class="t" style="top:93px;font-size:7.88px;color:#3c3c3c;left:85.95px;">Calm Sailing Inc</div>
<div class="t" style="top:93px;font-size:7.88px;color:#3c3c3c;left:219.60px;">Calm Sailing Inc</div>
<div class="t" style="top:93px;font-size:7.88px;color:#3c3c3c;left:379.65px;">Qualification (20%)</div>
<div class="t" style="top:93px;font-size:7.88px;color:#3c3c3c;left:346.43px;width:300px;text-align:center;">20</div>
<div class="t" style="top:93px;font-size:7.88px;color:#3c3c3c;left:534.00px;">29.04.2021</div>
<div class="t" style="top:93px;font-size:7.88px;color:#3c3c3c;left:614.55px;">2021 Q2</div>
<div class="t" style="top:93px;font-size:7.88px;color:#3c3c3c;left:442.25px;width:300px;text-align:right;">€625.000</div>
<div class="b" style="left:13.75px;top:104.88px;width:760.00px;height:0.80px;background:#f5f5f5;"></div>
<div class="t" style="top:107px;font-size:7.88px;color:#3c3c3c;left:18.75px;">chris</div>
<div class="t" style="top:107px;font-size:7.88px;color:#3c3c3c;left:85.95px;">Anytime Air Support Inc</div>
<div class="t" style="top:107px;font-size:7.88px;color:#3c3c3c;left:219.60px;">Anytime Air Support Inc</div>
<div class="t" style="top:107px;font-size:7.88px;color:#3c3c3c;left:379.65px;">Id. Decision Makers ...</div>
<div class="t" style="top:107px;font-size:7.88px;color:#3c3c3c;left:346.43px;width:300px;text-align:center;">40</div>
<div class="t" style="top:107px;font-size:7.88px;color:#3c3c3c;left:534.00px;">30.11.2021</div>
<div class="t" style="top:107px;font-size:7.88px;color:#3c3c3c;left:614.55px;">2021 Q4</div>
<div class="t" style="top:107px;font-size:7.88px;color:#3c3c3c;left:442.25px;width:300px;text-align:right;">€412.500</div>
<div class="b" style="left:13.75px;top:118.80px;width:760.00px;height:0.80px;background:#f5f5f5;"></div>
<div class="t" style="top:121px;font-size:7.88px;color:#3c3c3c;left:18.75px;">chris</div>
<div class="t" style="top:121px;font-size:7.88px;color:#3c3c3c;left:85.95px;">T-Squared Techs</div>
<div class="t" style="top:121px;font-size:7.88px;color:#3c3c3c;left:219.60px;">T-Squared Techs</div>
<div class="t" style="top:121px;font-size:7.88px;color:#3c3c3c;left:379.65px;">Id. Decision Makers ...</div>
<div class="t" style="top:121px;font-size:7.88px;color:#3c3c3c;left:346.43px;width:300px;text-align:center;">40</div>
<div class="t" style="top:121px;font-size:7.88px;color:#3c3c3c;left:534.00px;">30.12.2021</div>
<div class="t" style="top:121px;font-size:7.88px;color:#3c3c3c;left:614.55px;">2021 Q4</div>
<div class="t" style="top:121px;font-size:7.88px;color:#3c3c3c;left:442.25px;width:300px;text-align:right;">€312.500</div>
<div class="b" style="left:13.75px;top:132.72px;width:760.00px;height:0.80px;background:#f5f5f5;"></div>
<svg class="b" style="left:15.20px;top:154.34px" width="6.4" height="6.2" viewBox="0 0 6.4 6.2"><rect x="0.4" y="0.4" width="5.6" height="5.4" rx="0.8" fill="#d9d9d9" stroke="#a9a9a9" stroke-width="0.8"/><path d="M1.6 3.1 H4.8" stroke="#6a6a6a" stroke-width="0.9"/></svg><div class="t" style="top:152px;font-size:7.33px;color:#3c3c3c;font-weight:bold;font-family:'DejaVu Sans Condensed', 'DejaVu Sans', sans-serif;left:25.00px;">User: jim (1 Item)</div>
<div class="b" style="left:13.75px;top:163.94px;width:760.00px;height:1.30px;background:#d3d3d3;"></div>
<div class="t" style="top:166px;font-size:7.88px;color:#3c3c3c;left:18.75px;">jim</div>
<div class="t" style="top:166px;font-size:7.88px;color:#3c3c3c;left:85.95px;">J.K.M. Corp (HA)</div>
<div class="t" style="top:166px;font-size:7.88px;color:#3c3c3c;left:219.60px;">J.K.M. Corp (HA)</div>
<div class="t" style="top:166px;font-size:7.88px;color:#3c3c3c;left:379.65px;">Proposal/Price Quot...</div>
<div class="t" style="top:166px;font-size:7.88px;color:#3c3c3c;left:346.43px;width:300px;text-align:center;">60</div>
<div class="t" style="top:166px;font-size:7.88px;color:#3c3c3c;left:534.00px;">28.04.2021</div>
<div class="t" style="top:166px;font-size:7.88px;color:#3c3c3c;left:614.55px;">2021 Q2</div>
<div class="t" style="top:166px;font-size:7.88px;color:#3c3c3c;left:442.25px;width:300px;text-align:right;">€284.818</div>
<div class="b" style="left:13.75px;top:178.34px;width:760.00px;height:0.80px;background:#f5f5f5;"></div>
<svg class="b" style="left:15.20px;top:199.96px" width="6.4" height="6.2" viewBox="0 0 6.4 6.2"><rect x="0.4" y="0.4" width="5.6" height="5.4" rx="0.8" fill="#d9d9d9" stroke="#a9a9a9" stroke-width="0.8"/><path d="M1.6 3.1 H4.8" stroke="#6a6a6a" stroke-width="0.9"/></svg><div class="t" style="top:198px;font-size:7.33px;color:#3c3c3c;font-weight:bold;font-family:'DejaVu Sans Condensed', 'DejaVu Sans', sans-serif;left:25.00px;">User: max (3 Items)</div>
<div class="b" style="left:13.75px;top:209.56px;width:760.00px;height:1.30px;background:#d3d3d3;"></div>
<div class="t" style="top:212px;font-size:7.88px;color:#3c3c3c;left:18.75px;">max</div>
<div class="t" style="top:212px;font-size:7.88px;color:#3c3c3c;left:85.95px;">Draft Diversified Energy Inc</div>
<div class="t" style="top:212px;font-size:7.88px;color:#3c3c3c;left:219.60px;">Draft Diversified Energy Inc</div>
<div class="t" style="top:212px;font-size:7.88px;color:#3c3c3c;left:379.65px;">Proposal/Price Quot...</div>
<div class="t" style="top:212px;font-size:7.88px;color:#3c3c3c;left:346.43px;width:300px;text-align:center;">60</div>
<div class="t" style="top:212px;font-size:7.88px;color:#3c3c3c;left:534.00px;">27.02.2021</div>
<div class="t" style="top:212px;font-size:7.88px;color:#3c3c3c;left:614.55px;">2021 Q1</div>
<div class="t" style="top:212px;font-size:7.88px;color:#3c3c3c;left:442.25px;width:300px;text-align:right;">€21.893</div>
<div class="b" style="left:13.75px;top:223.96px;width:760.00px;height:0.80px;background:#f5f5f5;"></div>
<div class="t" style="top:226px;font-size:7.88px;color:#3c3c3c;left:18.75px;">max</div>
<div class="t" style="top:226px;font-size:7.88px;color:#3c3c3c;left:85.95px;">Draft Diversified Energy Inc</div>
<div class="t" style="top:226px;font-size:7.88px;color:#3c3c3c;left:219.60px;">Draft Diversified Energy Inc</div>
<div class="t" style="top:226px;font-size:7.88px;color:#3c3c3c;left:379.65px;">Qualification (20%)</div>
<div class="t" style="top:226px;font-size:7.88px;color:#3c3c3c;left:346.43px;width:300px;text-align:center;">20</div>
<div class="t" style="top:226px;font-size:7.88px;color:#3c3c3c;left:534.00px;">01.03.2021</div>
<div class="t" style="top:226px;font-size:7.88px;color:#3c3c3c;left:614.55px;">2021 Q1</div>
<div class="t" style="top:226px;font-size:7.88px;color:#3c3c3c;left:442.25px;width:300px;text-align:right;">€187.024</div>
<div class="b" style="left:13.75px;top:237.88px;width:760.00px;height:0.80px;background:#f5f5f5;"></div>
<div class="t" style="top:240px;font-size:7.88px;color:#3c3c3c;left:18.75px;">max</div>
<div class="t" style="top:240px;font-size:7.88px;color:#3c3c3c;left:85.95px;">Draft Diversified Energy Inc</div>
<div class="t" style="top:240px;font-size:7.88px;color:#3c3c3c;left:219.60px;">Draft Diversified Energy Inc</div>
<div class="t" style="top:240px;font-size:7.88px;color:#3c3c3c;left:379.65px;">Qualification (20%)</div>
<div class="t" style="top:240px;font-size:7.88px;color:#3c3c3c;left:346.43px;width:300px;text-align:center;">20</div>
<div class="t" style="top:240px;font-size:7.88px;color:#3c3c3c;left:534.00px;">23.11.2021</div>
<div class="t" style="top:240px;font-size:7.88px;color:#3c3c3c;left:614.55px;">2021 Q4</div>
<div class="t" style="top:240px;font-size:7.88px;color:#3c3c3c;left:442.25px;width:300px;text-align:right;">€255.774</div>
<div class="b" style="left:13.75px;top:251.80px;width:760.00px;height:0.80px;background:#f5f5f5;"></div>
<svg class="b" style="left:15.20px;top:273.42px" width="6.4" height="6.2" viewBox="0 0 6.4 6.2"><rect x="0.4" y="0.4" width="5.6" height="5.4" rx="0.8" fill="#d9d9d9" stroke="#a9a9a9" stroke-width="0.8"/><path d="M1.6 3.1 H4.8" stroke="#6a6a6a" stroke-width="0.9"/></svg><div class="t" style="top:271px;font-size:7.33px;color:#3c3c3c;font-weight:bold;font-family:'DejaVu Sans Condensed', 'DejaVu Sans', sans-serif;left:25.00px;">User: sally (5 Items)</div>
<div class="b" style="left:13.75px;top:283.02px;width:760.00px;height:1.30px;background:#d3d3d3;"></div>
<div class="t" style="top:286px;font-size:7.88px;color:#3c3c3c;left:18.75px;">sally</div>
<div class="t" style="top:286px;font-size:7.88px;color:#3c3c3c;left:85.95px;">Gifted Holdings AG</div>
<div class="t" style="top:286px;font-size:7.88px;color:#3c3c3c;left:219.60px;">Gifted Holdings AG</div>
<div class="t" style="top:286px;font-size:7.88px;color:#3c3c3c;left:379.65px;">Closed Won (100%)</div>
<div class="t" style="top:286px;font-size:7.88px;color:#3c3c3c;left:346.43px;width:300px;text-align:center;">100</div>
<div class="t" style="top:286px;font-size:7.88px;color:#3c3c3c;left:534.00px;">10.11.2020</div>
<div class="t" style="top:286px;font-size:7.88px;color:#3c3c3c;left:614.55px;">2020 Q4</div>
<div class="t" style="top:286px;font-size:7.88px;color:#3c3c3c;left:442.25px;width:300px;text-align:right;">€163.350</div>
<div class="b" style="left:13.75px;top:297.42px;width:760.00px;height:0.80px;background:#f5f5f5;"></div>
<div class="t" style="top:299px;font-size:7.88px;color:#3c3c3c;left:18.75px;">sally</div>
<div class="t" style="top:299px;font-size:7.88px;color:#3c3c3c;left:85.95px;">Smith &amp; Sons</div>
<div class="t" style="top:299px;font-size:7.88px;color:#3c3c3c;left:219.60px;">Smith &amp; Sons</div>
<div class="t" style="top:299px;font-size:7.88px;color:#3c3c3c;left:379.65px;">Closed Won (100%)</div>
<div class="t" style="top:299px;font-size:7.88px;color:#3c3c3c;left:346.43px;width:300px;text-align:center;">100</div>
<div class="t" style="top:299px;font-size:7.88px;color:#3c3c3c;left:534.00px;">05.02.2021</div>
<div class="t" style="top:299px;font-size:7.88px;color:#3c3c3c;left:614.55px;">2021 Q1</div>
<div class="t" style="top:299px;font-size:7.88px;color:#3c3c3c;left:442.25px;width:300px;text-align:right;">€180.149</div>
<div class="b" style="left:13.75px;top:311.34px;width:760.00px;height:0.80px;background:#f5f5f5;"></div>
</div><div class="b" style="left:13.00px;top:368.70px;width:0.90px;height:331.20px;background:#dedede;"></div>
<div class="b" style="left:13.90px;top:673.20px;width:760.00px;height:8.40px;background:#f1f1f1;"></div>
<div class="b" style="left:24.30px;top:673.20px;width:760.00px;height:8.40px;background:#c1c1c1;"></div>
<div class="b" style="left:16.4px;top:675.6px;width:0;height:0;border-top:1.8px solid transparent;border-bottom:1.8px solid transparent;border-right:2.6px solid #8a8a8a"></div>
<div class="b" style="left:13.90px;top:681.60px;width:760.00px;height:18.20px;background:linear-gradient(#e9e9e9,#f2f2f2);border-bottom:0.9px solid #d4d4d4;box-sizing:border-box;"></div>
<svg class="b" style="left:17.80px;top:685.60px" width="10" height="11" viewBox="0 0 10 11"><path d="M0.8 0.6 H6.2 L9 3.4 V10.4 H0.8 Z" fill="#eef4fc" stroke="#7ea6dc" stroke-width="0.8"/><path d="M6.2 0.6 V3.4 H9" fill="none" stroke="#7ea6dc" stroke-width="0.7"/><rect x="3.6" y="5.6" width="5.6" height="4.6" fill="#d5e4f7" stroke="#7ea6dc" stroke-width="0.6"/></svg></div>
<div class="b" style="left:769px;top:0;width:7px;height:704px;background:linear-gradient(90deg,rgba(120,130,130,.2),rgba(255,255,255,0))"></div>
<div class="b" style="left:767.2px;top:0;width:1.8px;height:704px;background:#6e7d7c"></div>
</body></html>
